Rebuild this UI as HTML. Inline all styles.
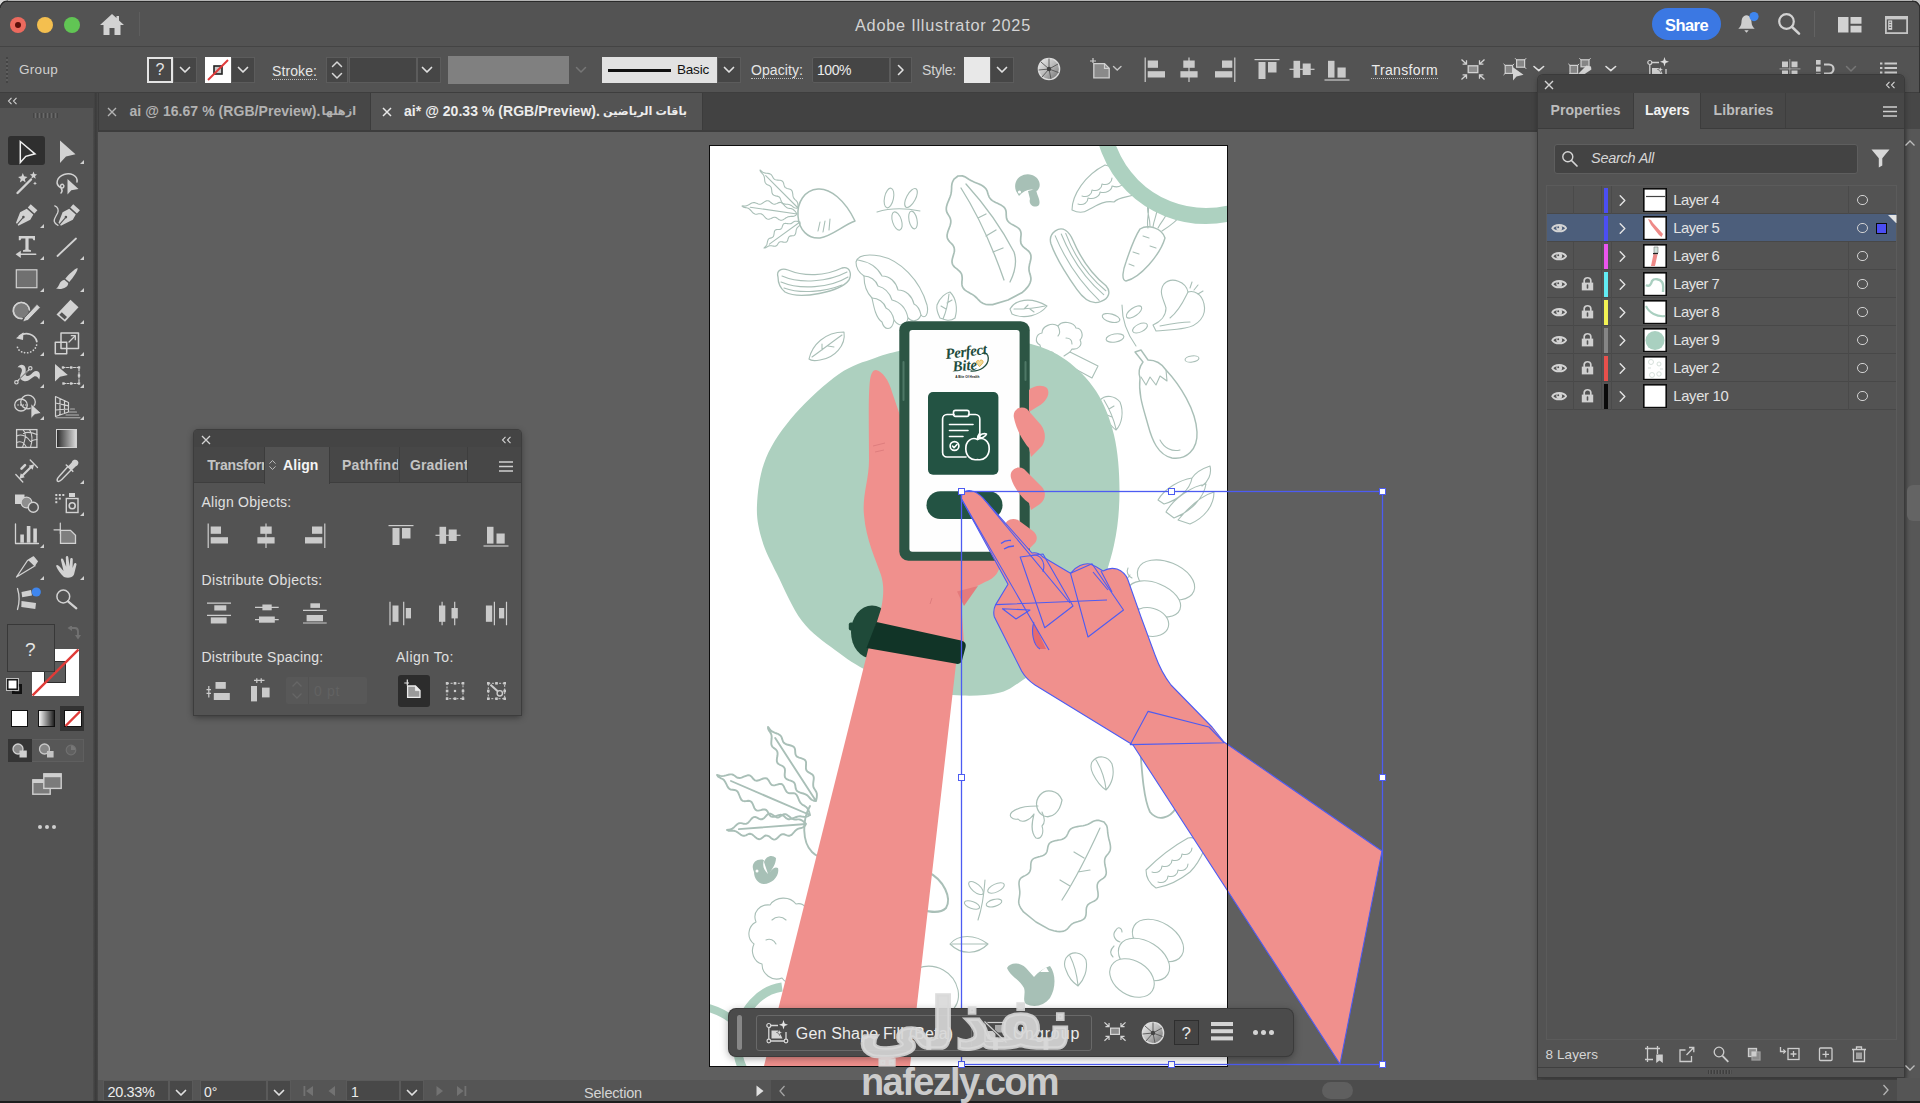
<!DOCTYPE html>
<html lang="en">
<head>
<meta charset="utf-8">
<title>Adobe Illustrator 2025</title>
<style>
*{box-sizing:border-box;margin:0;padding:0}
html,body{width:1920px;height:1103px;overflow:hidden;background:#535353}
body{position:relative;font-family:"Liberation Sans","DejaVu Sans",sans-serif;color:#d6d6d6;font-size:14px}
.abs{position:absolute}
#titlebar{left:0;top:0;width:1920px;height:47px;background:#535353;border-bottom:1px solid #444}
#ctrlbar{left:0;top:48px;width:1920px;height:45px;background:#535353;border-bottom:1px solid #3e3e3e}
#tabbar{left:96px;top:93px;width:1441px;height:38px;background:#424242}
#canvas{left:98px;top:131px;width:1439px;height:949px;background:#5f5f5f;overflow:hidden}
#leftbar{left:0;top:93px;width:94px;height:1010px;background:#535353}
#leftsep{left:93px;top:93px;width:5px;height:1010px;background:linear-gradient(90deg,#4b4b4b,#3b3b3b 55%,#484848)}
#status{left:98px;top:1080px;width:1822px;height:23px;background:#555}
#dock{left:1537px;top:93px;width:383px;height:987px;background:#4a4a4a}
.t{position:absolute;white-space:nowrap;line-height:1}
</style>
</head>
<body>
<div id="titlebar" class="abs"></div>
<div id="ctrlbar" class="abs"></div>
<div id="tabbar" class="abs"></div>
<div id="canvas" class="abs"></div>
<div id="leftbar" class="abs"></div>
<div id="leftsep" class="abs"></div>
<div id="dock" class="abs"></div>
<div id="status" class="abs"></div>
<div class="abs" style="left:10px;top:17px;width:16px;height:16px;border-radius:50%;background:#ec6a5e"></div>
<div class="abs" style="left:15px;top:22px;width:6px;height:6px;border-radius:50%;background:#5a0f0a"></div>
<div class="abs" style="left:37px;top:17px;width:16px;height:16px;border-radius:50%;background:#f4bf4f"></div>
<div class="abs" style="left:64px;top:17px;width:16px;height:16px;border-radius:50%;background:#61c554"></div>
<svg class="abs" style="left:99px;top:13px" width="26" height="23" viewBox="0 0 26 23"><path d="M13 1 L1 12 H4.5 V22 H10.5 V15 H15.5 V22 H21.5 V12 H25 L20 7.4 V3 H17.5 V5.1 Z" fill="#d2d2d2"/></svg>
<div class="abs" style="left:139px;top:12px;width:1px;height:24px;background:#5e5e5e"></div>
<span class="t" style="left:855px;top:16.80px;font-size:16.3px;color:#d4d4d4;letter-spacing:0.759px;">Adobe Illustrator 2025</span>
<div class="abs" style="left:1652px;top:8px;width:69px;height:32px;border-radius:16px;background:#3b78e3"></div>
<span class="t" style="left:1665px;top:16.53px;font-size:16.5px;color:#ffffff;font-weight:700;letter-spacing:-0.572px;">Share</span>
<svg class="abs" style="left:1736px;top:12px" width="24" height="24" viewBox="0 0 24 24"><path d="M10.5 3.2 C6.8 3.6 5.6 6.8 5.5 10 C5.4 13.5 4 15 2.3 16.8 H18.7 C17 15 15.6 13.5 15.5 10 C15.4 6.8 14.2 3.6 10.5 3.2 Z M8.3 18.3 H12.7 L10.5 20.8 Z" fill="#cfcfcf"/><circle cx="18" cy="4.6" r="4.6" fill="#3f86ee"/></svg>
<svg class="abs" style="left:1776px;top:11px" width="26" height="26" viewBox="0 0 26 26"><circle cx="10.5" cy="10.5" r="7.3" fill="none" stroke="#d2d2d2" stroke-width="2.2"/><path d="M15.8 15.8 L23 22.6" stroke="#d2d2d2" stroke-width="2.6" stroke-linecap="round"/></svg>
<div class="abs" style="left:1814px;top:11px;width:1px;height:26px;background:#626262"></div>
<svg class="abs" style="left:1838px;top:17px" width="24" height="16" viewBox="0 0 24 16"><path d="M0 0 H10.5 V15.5 H0 Z M12.5 0 H23.5 V6.8 H12.5 Z M12.5 8.8 H23.5 V15.5 H12.5 Z" fill="#d2d2d2"/></svg>
<svg class="abs" style="left:1885px;top:16px" width="23" height="18" viewBox="0 0 23 18"><rect x="0.9" y="0.9" width="21.2" height="16.2" fill="none" stroke="#c4c4c4" stroke-width="1.8"/><rect x="0" y="0" width="23" height="3.4" fill="#c8c8c8"/><rect x="3.2" y="4.4" width="4" height="9.4" fill="#d4d4d4"/><path d="M4.200 6.200 H6.200 M4.200 8.800 H6.200 M4.200 11.400 H6.200" stroke="#555" stroke-width="1"/></svg>
<!-- window corners -->
<div class="abs" style="left:0;top:0;width:1920px;height:1px;background:#b4b4b4"></div>
<div class="abs" style="left:0;top:1px;width:1920px;height:1.2px;background:#2a2a2a"></div>
<div class="abs" style="left:1919px;top:0;width:1px;height:1103px;background:#333"></div>
<svg class="abs" style="left:0;top:0" width="8" height="8"><path d="M0 0 H8 A8 8 0 0 0 0 8 Z" fill="#d8d8d8"/><path d="M0 8 A8 8 0 0 1 8 1" fill="none" stroke="#2a2a2a" stroke-width="1.200"/></svg>
<svg class="abs" style="left:1912px;top:0" width="8" height="8"><path d="M8 0 H0 A8 8 0 0 1 8 8 Z" fill="#c4c4c4"/><path d="M8 8 A8 8 0 0 0 0 1" fill="none" stroke="#2a2a2a" stroke-width="1.200"/></svg>

<style>
.chev{position:absolute;width:12px;height:8px}
.fld{position:absolute;background:#464646;border:1px solid #5c5c5c}
.dot{position:absolute;height:0;border-bottom:1.5px dotted #bdbdbd}
</style>
<svg width="0" height="0" style="position:absolute"><defs>
<symbol id="chv" viewBox="0 0 12 8"><path d="M1.5 1.5 L6 6 L10.5 1.5" fill="none" stroke="#e0e0e0" stroke-width="1.7" stroke-linecap="round" stroke-linejoin="round"/></symbol>
<symbol id="chvd" viewBox="0 0 12 8"><path d="M1.5 1.5 L6 6 L10.5 1.5" fill="none" stroke="#767676" stroke-width="1.5" stroke-linecap="round" stroke-linejoin="round"/></symbol>
</defs></svg>
<!-- grip -->
<div class="abs" style="left:6px;top:57px;width:2px;height:26px;background:repeating-linear-gradient(#444 0 2px,#5e5e5e 2px 4px)"></div>
<span class="t" style="left:19px;top:63.07px;font-size:13.5px;color:#d0d0d0;letter-spacing:0.294px;">Group</span>
<!-- fill ? -->
<div class="abs" style="left:147px;top:57px;width:26px;height:26px;border:2px solid #e4e4e4;background:#484848"></div>
<span class="t" style="left:155.5px;top:62.46px;font-size:16px;color:#e4e4e4;">?</span>
<div class="fld" style="left:173px;top:57px;width:24px;height:26px"></div>
<svg class="chev" style="left:179px;top:66px"><use href="#chv"/></svg>
<!-- stroke none -->
<div class="abs" style="left:205px;top:57px;width:26px;height:26px;background:#fff"></div>
<svg class="abs" style="left:205px;top:57px" width="26" height="26"><rect x="9" y="9" width="8" height="8" fill="#c8c8c8" stroke="#222" stroke-width="1.6"/><path d="M3 23 L23 3" stroke="#e03a3a" stroke-width="2"/></svg>
<div class="fld" style="left:231px;top:57px;width:24px;height:26px"></div>
<svg class="chev" style="left:237px;top:66px"><use href="#chv"/></svg>
<span class="t" style="left:272px;top:64.15px;font-size:14px;color:#e6e6e6;letter-spacing:0.092px;">Stroke:</span>
<div class="dot" style="left:272px;top:79px;width:45px"></div>
<div class="fld" style="left:326px;top:57px;width:22px;height:26px"></div>
<svg class="abs" style="left:331px;top:60px" width="12" height="20"><path d="M1.5 6.5 L6 2 L10.5 6.5 M1.5 13.5 L6 18 L10.5 13.5" fill="none" stroke="#d8d8d8" stroke-width="1.5" stroke-linecap="round" stroke-linejoin="round"/></svg>
<div class="fld" style="left:349px;top:57px;width:68px;height:26px;background:#454545"></div>
<div class="fld" style="left:417px;top:57px;width:24px;height:26px"></div>
<svg class="chev" style="left:421px;top:66px"><use href="#chv"/></svg>
<div class="abs" style="left:448px;top:56px;width:121px;height:28px;background:#808080"></div>
<svg class="chev" style="left:575px;top:66px"><use href="#chvd"/></svg>
<!-- Basic -->
<div class="abs" style="left:602px;top:57px;width:115px;height:26px;background:#e2e2e2"></div>
<div class="abs" style="left:608px;top:69px;width:63px;height:2.5px;background:#111"></div>
<span class="t" style="left:677px;top:63.07px;font-size:13.5px;color:#111;letter-spacing:-0.203px;">Basic</span>
<div class="fld" style="left:717px;top:57px;width:24px;height:26px"></div>
<svg class="chev" style="left:723px;top:66px"><use href="#chv"/></svg>
<span class="t" style="left:751px;top:62.65px;font-size:14px;color:#e6e6e6;letter-spacing:0.080px;">Opacity:</span>
<div class="dot" style="left:751px;top:78px;width:52px"></div>
<div class="fld" style="left:812px;top:57px;width:78px;height:26px;border-radius:2px 0 0 2px;background:#454545"></div>
<span class="t" style="left:817px;top:62.65px;font-size:14px;color:#ececec;letter-spacing:-0.453px;">100%</span>
<div class="fld" style="left:890px;top:57px;width:22px;height:26px"></div>
<svg class="abs" style="left:897px;top:64px" width="8" height="12"><path d="M1.5 1.5 L6 6 L1.5 10.5" fill="none" stroke="#e0e0e0" stroke-width="1.6" stroke-linecap="round" stroke-linejoin="round"/></svg>
<span class="t" style="left:922px;top:63.15px;font-size:14px;color:#d4d4d4;letter-spacing:-0.169px;">Style:</span>
<div class="abs" style="left:964px;top:57px;width:26px;height:26px;background:#e8e8e8"></div>
<div class="fld" style="left:990px;top:57px;width:24px;height:26px"></div>
<svg class="chev" style="left:996px;top:66px"><use href="#chv"/></svg>
<!-- recolor disc -->
<svg class="abs" style="left:1037px;top:57px" width="24" height="24" viewBox="0 0 24 24"><defs><linearGradient id="dg" x1="0" y1="0" x2="1" y2="1"><stop offset="0" stop-color="#f0f0f0"/><stop offset=".5" stop-color="#b8b8b8"/><stop offset="1" stop-color="#6a6a6a"/></linearGradient></defs><circle cx="12" cy="12" r="10.6" fill="url(#dg)" stroke="#dcdcdc" stroke-width="1.4"/><path d="M12 12 L12 1.5 M12 12 L21 7 M12 12 L21.5 15.5 M12 12 L14 22 M12 12 L5 20 M12 12 L1.6 13 M12 12 L4 5" stroke="#555" stroke-width=".9"/><circle cx="12" cy="12" r="2.2" fill="#444"/></svg>
<!-- artboard doc icon -->
<svg class="abs" style="left:1088px;top:58px" width="36" height="22" viewBox="0 0 36 22"><path d="M5 0 V5 M2 3 H8" stroke="#cfcfcf" stroke-width="1.2"/><path d="M5.8 5.6 H16.5 L21.2 10.3 V19.8 H5.8 Z" fill="#8a8a8a" stroke="#d0d0d0" stroke-width="1.3"/><path d="M16.5 5.6 V10.3 H21.2" fill="none" stroke="#d0d0d0" stroke-width="1.2"/><path d="M25.5 8.5 L29.2 12 L33 8.5" fill="none" stroke="#c4c4c4" stroke-width="1.4" stroke-linecap="round"/></svg>
<svg width="0" height="0" style="position:absolute"><defs>
<symbol id="alL" viewBox="0 0 24 26"><path d="M1.2 0.5 V25" stroke="#cdcdcd" stroke-width="1.2"/><rect x="3.7" y="3.5" width="10.3" height="7.3" fill="#cacaca"/><rect x="3.7" y="14.2" width="17.3" height="6.3" fill="#cacaca"/></symbol>
<symbol id="alC" viewBox="0 0 24 26"><path d="M12 0.5 V25" stroke="#cdcdcd" stroke-width="1.2"/><rect x="6.3" y="3.5" width="11.4" height="7.3" fill="#cacaca"/><rect x="3.4" y="14.2" width="17.2" height="6.3" fill="#cacaca"/></symbol>
<symbol id="alR" viewBox="0 0 24 26"><path d="M22.8 0.5 V25" stroke="#cdcdcd" stroke-width="1.2"/><rect x="10" y="3.5" width="10.3" height="7.3" fill="#cacaca"/><rect x="3" y="14.2" width="17.3" height="6.3" fill="#cacaca"/></symbol>
<symbol id="alT" viewBox="0 0 26 24"><path d="M0.5 1.6 H25.5" stroke="#cdcdcd" stroke-width="1.2"/><rect x="4.5" y="4" width="7" height="17" fill="#cacaca"/><rect x="14" y="4" width="8.5" height="10.5" fill="#cacaca"/></symbol>
<symbol id="alM" viewBox="0 0 26 24"><path d="M0.5 11.3 H25.5" stroke="#cdcdcd" stroke-width="1.2"/><rect x="4.5" y="2.8" width="6.6" height="17" fill="#cacaca"/><rect x="13.7" y="5.5" width="8" height="11.5" fill="#cacaca"/></symbol>
<symbol id="alB" viewBox="0 0 26 24"><path d="M0.5 22 H25.5" stroke="#cdcdcd" stroke-width="1.2"/><rect x="4" y="2.8" width="6.5" height="16.8" fill="#cacaca"/><rect x="13.5" y="9.5" width="8.2" height="10.1" fill="#cacaca"/></symbol>
</defs></svg>
<svg class="abs" style="left:1144px;top:56.5px" width="24" height="26"><use href="#alL"/></svg>
<svg class="abs" style="left:1177.4px;top:56.5px" width="24" height="26"><use href="#alC"/></svg>
<svg class="abs" style="left:1212.4px;top:56.5px" width="24" height="26"><use href="#alR"/></svg>
<svg class="abs" style="left:1253.5px;top:57.5px" width="26" height="24"><use href="#alT"/></svg>
<svg class="abs" style="left:1288.5px;top:57.5px" width="26" height="24"><use href="#alM"/></svg>
<svg class="abs" style="left:1323.5px;top:57.5px" width="26" height="24"><use href="#alB"/></svg>
<span class="t" style="left:1371.5px;top:62.95px;font-size:14px;color:#ececec;letter-spacing:0.358px;">Transform</span>
<div class="dot" style="left:1371px;top:78px;width:67px"></div>
<!-- isolate icon -->
<svg class="abs" style="left:1460px;top:58px" width="26" height="24" viewBox="0 0 26 24"><rect x="8.2" y="7.8" width="9.6" height="6.8" fill="#8c8c8c" stroke="#d2d2d2" stroke-width="1.3"/><g stroke="#d2d2d2" stroke-width="1.3" fill="none"><path d="M1.5 1.5 L6.3 6 M6.5 2.3 V6.2 H2.6"/><path d="M24.5 1.5 L19.7 6 M19.5 2.3 V6.2 H23.4"/><path d="M1.5 21.5 L6.3 17 M6.5 20.7 V16.8 H2.6"/><path d="M24.5 21.5 L19.7 17 M19.5 20.7 V16.8 H23.4"/></g></svg>
<!-- select similar -->
<svg class="abs" style="left:1502px;top:57px" width="44" height="25" viewBox="0 0 44 25"><rect x="3.2" y="8.4" width="7.4" height="8" fill="#858585" stroke="#d0d0d0" stroke-width="1.2"/><rect x="14.6" y="2.8" width="8" height="7.4" fill="#858585" stroke="#d0d0d0" stroke-width="1.2"/><g stroke="#d0d0d0" stroke-width="1"><path d="M1.5 6.8 L3.4 8.6 M12.2 6.8 L10.4 8.6 M1.5 18 L3.4 16.2 M13 1.2 L14.8 3 M24.2 1.2 L22.4 3 M24.2 11.8 L22.4 10"/></g><path d="M11 10.3 V23.5 L14.5 19.5 L21.5 17.8 Z" fill="#d4d4d4"/><path d="M32 9.5 L36.8 13.7 L41.6 9.5" fill="none" stroke="#e0e0e0" stroke-width="1.6" stroke-linecap="round" stroke-linejoin="round"/></svg>
<!-- edit similar -->
<svg class="abs" style="left:1567px;top:57px" width="52" height="25" viewBox="0 0 52 25"><rect x="3" y="8.4" width="7.6" height="8" fill="#858585" stroke="#d0d0d0" stroke-width="1.2"/><rect x="14" y="2.8" width="8" height="7" fill="#858585" stroke="#d0d0d0" stroke-width="1.2"/><g stroke="#d0d0d0" stroke-width="1"><path d="M1.3 6.8 L3.2 8.6 M12.2 6.8 L10.4 8.6 M1.3 18 L3.2 16.2 M12.4 1.2 L14.2 3 M23.6 1.2 L21.8 3"/></g><path d="M10.5 17.6 L19.5 8.4 L24 9.5 L24.4 12.6 L17 17.6 Z" fill="#d4d4d4"/><path d="M39 9.5 L43.8 13.7 L48.6 9.5" fill="none" stroke="#e0e0e0" stroke-width="1.6" stroke-linecap="round" stroke-linejoin="round"/></svg>
<!-- gen shape fill -->
<svg class="abs" style="left:1646px;top:56px" width="26" height="26" viewBox="0 0 26 26"><circle cx="3.8" cy="6.5" r="2" fill="none" stroke="#d0d0d0" stroke-width="1.2"/><path d="M5.8 6.5 H13 M3.8 8.5 V21 H20 V13" fill="none" stroke="#d0d0d0" stroke-width="1.3"/><path d="M6 12 H14 L17 19 H6 Z" fill="#cfcfcf"/><path d="M18.5 1 L19.6 4.6 L23 5.8 L19.6 7 L18.5 10.6 L17.4 7 L14 5.8 L17.4 4.6 Z" fill="#dedede"/><path d="M14.5 10.5 L15.3 12.7 L17.5 13.5 L15.3 14.3 L14.5 16.5 L13.7 14.3 L11.5 13.5 L13.7 12.7 Z" fill="#dedede" stroke="#535353" stroke-width=".6"/></svg>
<!-- right icons -->
<svg class="abs" style="left:1779px;top:59px" width="22" height="20" viewBox="0 0 22 20"><path d="M3 2.5 H9 V8.3 H3 Z M12.5 2.5 H18.5 V8.3 H12.5 Z M3 11.5 H9 V17.5 H3 Z M12.5 11.5 H18.5 V17.5 H12.5 Z" fill="#cacaca"/><path d="M10.8 0 V20 M0.5 9.9 H21.5" stroke="#a0a0a0" stroke-width="1"/></svg>
<svg class="abs" style="left:1815px;top:59px" width="22" height="20" viewBox="0 0 22 20"><rect x="1" y="1" width="4.6" height="4.6" fill="#cacaca"/><rect x="1" y="7.6" width="4.6" height="5" fill="#cacaca"/><rect x="1" y="14.4" width="4.6" height="3.6" fill="#cacaca"/><path d="M9 5.5 H14 A4.5 4.5 0 0 1 14 14.5 H9" fill="none" stroke="#cacaca" stroke-width="2.2"/></svg>
<svg class="chev" style="left:1845px;top:65px"><use href="#chvd"/></svg>
<svg class="abs" style="left:1880px;top:62px" width="17" height="16" viewBox="0 0 17 16"><path d="M0 1.5 H2.4 M4.5 1.5 H17 M0 6 H2.4 M4.5 6 H17 M0 10.5 H2.4 M4.5 10.5 H17" stroke="#cacaca" stroke-width="2"/></svg>

<div class="abs" style="left:98px;top:93px;width:273px;height:38px;background:#474747;border-right:1px solid #3c3c3c;border-left:1px solid #3c3c3c"></div>
<div class="abs" style="left:371px;top:93px;width:332px;height:38px;background:#535353;border-right:1px solid #3c3c3c"></div>
<svg class="abs" style="left:107px;top:107px" width="10" height="10"><path d="M1 1 L9 9 M9 1 L1 9" stroke="#b4b4b4" stroke-width="1.4"/></svg>
<span class="t" style="left:129.5px;top:104.15px;font-size:14px;color:#b2b2b2;font-weight:700;letter-spacing:0.055px;">ai @ 16.67 % (RGB/Preview).</span>
<span class="t" style="left:321.5px;top:106.43px;font-size:11.3px;color:#b2b2b2;font-weight:700;direction:rtl">ازهلها</span>
<svg class="abs" style="left:382px;top:107px" width="10" height="10"><path d="M1 1 L9 9 M9 1 L1 9" stroke="#e8e8e8" stroke-width="1.5"/></svg>
<span class="t" style="left:404px;top:104.15px;font-size:14px;color:#ececec;font-weight:700;letter-spacing:0.037px;">ai* @ 20.33 % (RGB/Preview).</span>
<span class="t" style="left:603px;top:106.43px;font-size:11.3px;color:#ececec;font-weight:700;direction:rtl">باقات الرياضين</span>
<div id="tabline" class="abs" style="left:98px;top:130px;width:1439px;height:1.5px;background:#3d3d3d"></div>

<div class="abs" style="left:0;top:93px;width:94px;height:15px;background:#464646"></div>
<svg class="abs" style="left:7px;top:97px" width="12" height="8"><path d="M4.5 0.8 L1.5 4 L4.5 7.2 M9.5 0.8 L6.5 4 L9.5 7.2" fill="none" stroke="#cfcfcf" stroke-width="1.1"/></svg>
<div class="abs" style="left:33px;top:113px;width:26px;height:5px;background:repeating-linear-gradient(90deg,#454545 0 1px,#535353 1px 2px,#6a6a6a 2px 3px,#535353 3px 4px)"></div>
<div class="abs" style="left:8px;top:136px;width:37px;height:29px;border-radius:3px;background:#2f2f2f"></div>
<style>.tk{position:absolute;width:0;height:0;border-left:4px solid transparent;border-bottom:4px solid #d0d0d0}</style>
<svg class="abs" style="left:0;top:131px" width="94" height="490" viewBox="0 131 94 490" fill="none" stroke="#d2d2d2" stroke-width="1.5" stroke-linejoin="round" stroke-linecap="round">
<!-- r1 -->
<path d="M20.3 141.5 V162.5 L25.8 156.3 L35 153.8 Z" stroke="#f0f0f0" stroke-linejoin="miter"/>
<path d="M60 140.5 V163 L66 156.5 L75.5 154.3 Z" fill="#d2d2d2" stroke="none"/>
<!-- r2 wand / lasso-->
<path d="M17.5 193 L31 179.5" stroke-width="2.4"/>
<path d="M22.8 173 l1.300 3.200 3.400 .700 -2.600 2.200 .700 3.400 -2.800 -1.900 -2.900 1.900 .800 -3.400 -2.600 -2.200 3.400 -.700z M33.5 171.5 l1 2.400 2.600 .500 -2 1.700 .600 2.600 -2.200 -1.500 -2.200 1.500 .600 -2.600 -2 -1.700 2.600 -.500z M35 181.5 l.6 1.3 1.3 .6 -1.3 .6 -.6 1.3 -.6 -1.3 -1.3 -.6 1.3 -.6z" fill="#d2d2d2" stroke="none"/>
<path d="M77 182 C78 175 70 172.5 64 174.5 C57 177 54.5 184 60.5 187.5 C63.5 189 65 186 63 184.5 C61 183.5 59.5 186 61.5 189 C62.5 190.5 62 192 61 193"/>
<path d="M67.5 179 V194.5 L71.3 190.3 L78.5 189 Z" fill="#d2d2d2" stroke="none"/>
<!-- r3 pen / curvature -->
<path d="M26.7 208.8 L20.1 212.2 L16 222.8 L18.4 225.8 L30.3 219.8 L33.3 214.4 Z M27.8 207.4 L30.7 204.200 L37.400 210.200 L34.400 213.600 Z" fill="#d2d2d2" stroke="none"/>
<path d="M17.2 224.3 L22.8 217.800" stroke="#535353" stroke-width="1.1"/><circle cx="23.400" cy="217.100" r="1.300" fill="#535353" stroke="none"/>
<g transform="translate(1.2 0)"><path d="M68 208.800 L61.400 212.200 L57.300 222.800 L59.700 225.800 L71.600 219.800 L74.600 214.400 Z M69.100 207.400 L72 204.200 L78.700 210.200 L75.700 213.600 Z" fill="#d2d2d2" stroke="none"/>
<path d="M58.500 224.300 L64.100 217.800" stroke="#535353" stroke-width="1.1"/><circle cx="64.700" cy="217.100" r="1.300" fill="#535353" stroke="none"/></g>
<path d="M54.800 205.800 C58 207 58.800 210 57.600 213 C56 216.500 53.500 219 54.300 221.500 C55 224 56.500 224.800 58 225.300" stroke-width="1.300"/>
<!-- r4 type / line -->
<path d="M18.8 236 H35 V240.200 H33.500 L32.500 238.400 H28.600 V249.600 L31 250.300 V251.800 H23 V250.300 L25.400 249.600 V238.400 H21.400 L20.400 240.200 H18.800 Z" fill="#d2d2d2" stroke="none"/>
<path d="M20 254.300 H35.700" stroke-width="1.500"/><path d="M15.600 254.300 L20.800 250.700 V257.900 Z" fill="#d2d2d2" stroke="none"/>
<path d="M57.5 256 L76 238.5" stroke-width="1.8"/>
<!-- r5 rect / brush -->
<rect x="16.300" y="269.800" width="20.600" height="17.900" fill="#707070" stroke-width="1.200" stroke-linejoin="miter"/>
<path d="M77.500 268 C78.500 270 73 278 69.300 282 L65.300 278.800 C68 275 75 268.500 77.500 268 Z M64.300 279.800 L68.200 283 C68.500 287.500 62 290 56 288.600 C60 286.800 58.500 281 64.300 279.800 Z" fill="#d2d2d2" stroke="none"/>
<!-- r6 shaper / eraser -->
<path d="M22 318.5 A8 8 0 1 1 29 309.5" stroke-width="1.4"/><path d="M22.3 318.5 A8.2 8.2 0 0 1 13.5 311" stroke="none" fill="#8a8a8a"/>
<circle cx="21.5" cy="310.5" r="7.3" fill="#7a7a7a" stroke="none"/><path d="M22 318.5 A8 8 0 1 1 29.5 310" stroke-width="1.4"/>
<path d="M24.8 317.3 L37 304.3 L40.3 307.4 L28 320.3 L22.8 321.8 Z" fill="#d2d2d2" stroke="#535353" stroke-width=".8"/>
<path d="M56.5 314.5 L70.5 299.8 L78.5 307.3 L65 321.8 Z" fill="#d2d2d2" stroke="none"/><path d="M59.3 314.8 L61.8 312.2 L67 317 L64.7 319.6 Z" fill="#535353" stroke="none"/>
<!-- r7 rotate / scale -->
<path d="M19.5 336 C26 331.5 35 334 36.8 341.5" stroke-width="1.8"/><path d="M16 338.3 L23.5 332.2 L23 340 Z" fill="#d2d2d2" stroke="none"/>
<path d="M36.6 345 C35 352 26 355.5 19.5 350.5 C18 349.3 17.3 347.5 17.3 346" stroke-dasharray="0.1 3" stroke-width="1.7"/>
<rect x="55.3" y="342.3" width="11.4" height="11.4"/><rect x="61" y="333" width="17.5" height="15.5"/><path d="M69 342 L75 336" stroke-width="1.3"/><path d="M71.3 335.7 H75.3 V339.7" stroke-width="1.3"/>
<!-- r8 width / free transform -->
<path d="M17.600 367.500 C19.500 363.500 24.500 364 25.500 368 C26.500 372 24 375 27 376 C31 376.500 32 371.500 36 371 C39.800 370.800 40.800 375 39.200 379.500 C38 377.500 36.800 375.800 34.500 376.300 C31 378 29 381.800 24.500 381.200 C20.500 380.600 19.300 377 20.800 374 C22 371.500 22.500 369.500 21 368 C20 367.200 18.800 367.300 17.600 367.500 Z" fill="#d2d2d2" stroke="none"/>
<path d="M17.300 381.300 L29.500 369.200" stroke="#d2d2d2" stroke-width="1.200"/><path d="M19.500 379 L27.500 371.200" stroke="#535353" stroke-width=".9"/><circle cx="16.400" cy="382.300" r="1.700" fill="#535353" stroke-width="1.200"/><circle cx="30.300" cy="368.300" r="1.700" fill="#535353" stroke-width="1.200"/>
<path d="M55 364 V381.600 L60 376.800 L67.800 375 Z" fill="#d2d2d2" stroke="none"/>
<path d="M63 367.5 H79 V383.5 H64" stroke-width="1.2" stroke-dasharray="2 1.5"/><g fill="#d2d2d2" stroke="none"><rect x="61.8" y="366.3" width="2.4" height="2.4"/><rect x="70" y="366.3" width="2.4" height="2.4"/><rect x="77.8" y="366.3" width="2.4" height="2.4"/><rect x="77.8" y="374.3" width="2.4" height="2.4"/><rect x="77.8" y="382.3" width="2.4" height="2.4"/><rect x="70" y="382.3" width="2.4" height="2.4"/><rect x="62.3" y="382.3" width="2.4" height="2.4"/></g>
<!-- r9 shape builder / perspective -->
<ellipse cx="21" cy="405" rx="6.3" ry="6" stroke-width="1.3"/><ellipse cx="28" cy="402" rx="7.3" ry="6.8" stroke-width="1.3"/><path d="M18 405 H26" stroke-dasharray="0.1 2.5" stroke-width="1.4"/>
<path d="M31 404 V418.5 L34.8 414.5 L41 413.3 Z" fill="#d2d2d2" stroke="#535353" stroke-width=".7"/>
<path d="M55.5 396.5 V416.5 M55.5 396.5 L68.5 402.5 V412 L55.5 416.5 M60 398.5 V415 M64.5 400.5 V413.5 M55.5 403 L68.5 405.8 M55.5 410 L68.5 409" stroke-width="1.2"/><path d="M70.5 409 H74.5 M69.5 412 H76.5 M66 415 H78.5 M56 417.8 H80" stroke-width="1.1" stroke="#b4b4b4"/>
<!-- r10 mesh / gradient -->
<rect x="16.600" y="429.600" width="20.300" height="17.800" stroke-width="1.300" stroke-linejoin="miter"/><path d="M16.600 436 C22 433.500 27 436.500 30.500 441.500 C33 440 35 439.500 36.900 439.500 M16.600 442.500 C21 440.500 24 442 26.500 447.400 M23 429.600 C26.500 433 26 437.500 22.500 447.400 M29.500 429.600 C33 435 32.500 441 30.500 447.400 M23.500 433.500 C27 431.500 32 432.500 36.900 434.500" stroke-width="1.100"/>
<!-- r11 measure / eyedropper -->
<path d="M22 476 L31.500 466.500" stroke-width="2.200" stroke-linecap="butt"/><path d="M19.300 478.700 L20.800 473.300 L24.800 477.300 Z M34.200 464.300 L32.700 469.700 L28.700 465.700 Z" fill="#d2d2d2" stroke="none"/><path d="M15.800 474.500 L22.800 482 M30.200 460 L37.500 467.500" stroke-width="1.300"/><path d="M21.500 468.700 L25 465.200" stroke-width="2.600" stroke-linecap="round"/>
<path d="M68 466.5 L59 476.5 C57.5 478 56.8 479.7 57.3 481 C58.5 482 60.3 481 61.8 479.5 L71 470" stroke-width="1.4"/><path d="M66.3 465 L72.8 471.3 M68.5 467 L72.3 463 C73 460.3 75.5 459.8 77 461.3 C78.3 462.8 77.5 465 75.3 465.8 L71.2 469.8" fill="#d2d2d2" stroke-width="1.6"/>
<!-- r12 blend / symbol sprayer -->
<rect x="15" y="494.5" width="9.5" height="9.5" fill="#d2d2d2" stroke="none"/><circle cx="26.5" cy="502.5" r="5.4" fill="#8e8e8e" stroke="#d2d2d2" stroke-width="1.2"/><circle cx="33.3" cy="507.3" r="5" fill="#535353" stroke-width="1.4"/>
<g fill="#d2d2d2" stroke="none"><rect x="55.3" y="494" width="2" height="2"/><rect x="58.8" y="494" width="2" height="2"/><rect x="62.3" y="494" width="2" height="2"/><rect x="55.3" y="497.6" width="2" height="2"/><rect x="58.8" y="497.6" width="2" height="2"/><rect x="55.3" y="501.2" width="2" height="2"/><rect x="69" y="493" width="6" height="4"/></g><rect x="66.3" y="498.5" width="11.7" height="14" stroke-width="1.4" stroke-linejoin="miter"/><circle cx="72.2" cy="505.8" r="3" stroke-width="1.6"/>
<!-- r13 graph / artboard -->
<path d="M15.5 524 V543.5 H38.5" stroke-width="1.3"/><rect x="20.3" y="534.5" width="3.6" height="8.2" fill="#d2d2d2" stroke="none"/><rect x="26.8" y="526" width="3.6" height="16.7" fill="#d2d2d2" stroke="none"/><rect x="33.3" y="528.5" width="3.6" height="14.2" fill="#d2d2d2" stroke="none"/>
<path d="M60.3 523 V533.5 M54 529.8 H60.5" stroke-width="1.2"/><path d="M60.5 530.3 H70.5 L75.5 535.3 V543.3 H60.5 Z" fill="#7f7f7f" stroke-width="1.3" stroke-linejoin="miter"/>
<!-- r14 slice / hand -->
<path d="M16.5 577 L27.5 560.5 L33.5 556.8 L37.3 561.5 L33.8 566.5 Z M29 560 L35 565.7" stroke-width="1.3"/><path d="M28.5 559.5 L33.5 556.8 L37.3 561.5 L34.5 565.5 Z" fill="#d2d2d2" stroke="none"/>
<path d="M60.5 567.5 C58.5 565 56 564 56.3 566.5 C57.5 569.5 60.5 574 64 577 C67.5 578.5 72.5 578 74 574.5 L76.5 564.5 C76.5 562.5 74.5 562.5 74 564 L72.6 568 L72.8 559.3 C72.6 557.4 70.4 557.4 70.2 559.3 L69.6 566.5 L68.3 557.3 C68 555.5 65.8 555.7 65.8 557.6 L66.2 566.8 L63.3 559.5 C62.5 557.8 60.5 558.5 61 560.3 L63.5 571 Z" fill="#d2d2d2" stroke="none"/>
<!-- r15 ai toolbar / zoom -->
<path d="M17.5 588.5 C19.5 595 19.5 603 17.5 609.5" stroke-width="1.3"/><path d="M21.5 592 L31 590 L32 595.5 L22.2 597.3 Z M21.5 601 L36 603 L35.3 609 L21.3 607 Z" fill="#cfcfcf" stroke="none"/><circle cx="36.3" cy="592" r="4.6" fill="#3f86ee" stroke="none"/>
<circle cx="63.3" cy="596.5" r="6.4" stroke-width="1.5"/><path d="M68 601.3 L76.3 608.3" stroke-width="2.2"/>
</svg>
<div class="abs" style="left:56.2px;top:429.200px;width:21.200px;height:18.600px;border:1.300px solid #d2d2d2;background:linear-gradient(90deg,#2e2e2e,#d8d8d8)"></div>
<i class="tk" style="left:80px;top:160px"></i>
<i class="tk" style="left:40px;top:224px"></i>
<i class="tk" style="left:40px;top:256px"></i><i class="tk" style="left:80px;top:256px"></i>
<i class="tk" style="left:40px;top:288px"></i><i class="tk" style="left:80px;top:288px"></i>
<i class="tk" style="left:40px;top:320px"></i><i class="tk" style="left:80px;top:320px"></i>
<i class="tk" style="left:40px;top:352px"></i><i class="tk" style="left:80px;top:352px"></i>
<i class="tk" style="left:40px;top:384px"></i><i class="tk" style="left:80px;top:384px"></i>
<i class="tk" style="left:40px;top:416px"></i><i class="tk" style="left:80px;top:416px"></i>
<i class="tk" style="left:80px;top:480px"></i>
<i class="tk" style="left:80px;top:512px"></i>
<i class="tk" style="left:40px;top:544px"></i>
<i class="tk" style="left:40px;top:576px"></i><i class="tk" style="left:80px;top:576px"></i>
<!-- fill/stroke -->
<div class="abs" style="left:32px;top:649px;width:47px;height:47px;background:#fff"></div>
<div class="abs" style="left:44px;top:661px;width:22px;height:22px;background:#5c5c5c;border:1.5px solid #2e2e2e"></div>
<svg class="abs" style="left:32px;top:649px" width="47" height="47"><path d="M0.5 46.5 L46.5 0.5" stroke="#e03b38" stroke-width="2.4"/></svg>
<div class="abs" style="left:7px;top:624px;width:48px;height:48px;background:#555;border:1px solid #383838"></div>
<span class="t" style="left:25px;top:639.92px;font-size:19px;color:#e6e6e6;">?</span>
<svg class="abs" style="left:66px;top:626px" width="16" height="15" viewBox="0 0 16 15"><path d="M5.5 2 H9 C11 2 12 3.5 12 5.5 V9.5" fill="none" stroke="#727272" stroke-width="1.8"/><path d="M1.5 2 L6 -1 V5 Z M12 13.5 L9 9 H15 Z" fill="#727272"/></svg>
<svg class="abs" style="left:6px;top:678px" width="18" height="18" viewBox="0 0 18 18"><rect x="6" y="6" width="10" height="10" fill="#111" /><rect x="8.6" y="8.6" width="4.8" height="4.8" fill="#535353"/><rect x="1.8" y="1.8" width="9.4" height="9.4" fill="#fff" stroke="#111" stroke-width="1.4"/><rect x="0.5" y="0.5" width="12" height="12" fill="none" stroke="#d8d8d8" stroke-width=".8"/></svg>
<!-- colour mode -->
<div class="abs" style="left:60px;top:706px;width:24px;height:25px;background:#333"></div>
<div class="abs" style="left:10.5px;top:709.5px;width:17.5px;height:17.5px;background:#fff;border:1.3px solid #111"></div>
<div class="abs" style="left:37.5px;top:709.5px;width:17.5px;height:17.5px;background:linear-gradient(90deg,#f4f4f4,#222);border:1.3px solid #111"></div>
<div class="abs" style="left:64px;top:709.5px;width:17.5px;height:17.5px;background:#fff;border:1.3px solid #111"></div>
<svg class="abs" style="left:64px;top:709.5px" width="18" height="18"><path d="M1.5 16 L16 1.5" stroke="#e03b38" stroke-width="2.4"/></svg>
<!-- draw modes -->
<div class="abs" style="left:8px;top:739px;width:76px;height:23px;background:#575757;border:1px solid #5f5f5f"></div>
<div class="abs" style="left:8px;top:739px;width:23.5px;height:23px;background:#353535"></div>
<svg class="abs" style="left:8px;top:739px" width="76" height="23" viewBox="0 0 76 23"><circle cx="10" cy="10" r="5" fill="#8a8a8a" stroke="#d0d0d0" stroke-width="1.3"/><rect x="11.5" y="11.5" width="7.3" height="7" fill="#d0d0d0"/><circle cx="36.5" cy="10" r="5" fill="#868686" stroke="#c8c8c8" stroke-width="1.3"/><rect x="39" y="12" width="6.6" height="6.5" fill="#c4c4c4"/><circle cx="63" cy="11" r="4.8" fill="#606060" stroke="#707070" stroke-width="1.2"/><path d="M63 11 V6.5 A4.5 4.5 0 0 1 67.5 11 Z" fill="#777"/></svg>
<!-- screen mode -->
<svg class="abs" style="left:31px;top:772px" width="32" height="24" viewBox="0 0 32 24"><rect x="1.8" y="7.8" width="17.4" height="14.4" fill="#7b7b7b" stroke="#cfcfcf" stroke-width="1.4"/><rect x="1.8" y="7.8" width="17.4" height="3.2" fill="#cfcfcf"/><rect x="12.8" y="1.8" width="17.4" height="14.6" fill="#7b7b7b" stroke="#cfcfcf" stroke-width="1.4"/><rect x="12.8" y="1.8" width="17.4" height="3.4" fill="#cfcfcf"/></svg>
<div class="abs" style="left:37.5px;top:825px;width:4.4px;height:4.4px;border-radius:50%;background:#cfcfcf;box-shadow:7px 0 0 #cfcfcf,14px 0 0 #cfcfcf"></div>

<svg class="abs" style="left:98px;top:131px" width="1439" height="949" viewBox="98 131 1439 949">
<defs><path id="rh" d="M961.5,499 C960,493 966,489.5 972,491 C977,492 981,496 983,498 L1032,553 C1036,552 1040,554 1043,557 L1070.5,573.3 C1076,566 1084,563 1090,564 C1096,566 1100,569 1103,571 C1108,568 1113,568 1117,569 C1122,571 1126,575 1127.600,579 L1141,617 L1155,655 C1159,666 1164,676 1171,685 L1212,727 L1224,742 L1382,851 L1340,1064 L1133,745 L1035,685 C1029,681 1025,677 1021.600,671 L994.400,617 C993,612 994,608 995.700,604.600 L1008,584.200 Z"/><clipPath id="abclip"><rect x="710" y="146" width="517" height="920"/></clipPath></defs>
<rect x="709.5" y="145.5" width="518" height="921" fill="#ffffff" stroke="#0d0d0d" stroke-width="1"/>
<g clip-path="url(#abclip)">
<!--VEGSTART--><g fill="none" stroke="#a9bfb7" stroke-width="1.1" stroke-linecap="round" stroke-linejoin="round">
<!-- radish -->
<path d="M855,221 C845,200 830,188 818,189 C804,190 797,203 798,216 C799,230 808,239 820,238 C832,236 842,226 855,221 Z" stroke-width="1.5"/>
<path d="M820,222 L818,231 M825,221 L823,232 M830,219 L829,230"/>
<path d="M798.0,208.0 L798.1,206.7 L798.0,205.5 L797.9,204.3 L797.7,203.2 L797.4,202.3 L796.9,201.5 L796.3,200.8 L795.7,200.2 L795.0,199.6 L794.4,198.9 L793.8,198.2 L793.4,197.4 L793.1,196.4 L792.9,195.4 L792.8,194.2 L792.6,193.1 L792.4,192.0 L792.1,191.1 L791.6,190.3 L791.0,189.7 L790.1,189.3 L789.2,189.0 L788.1,188.7 L787.1,188.5 L786.2,188.1 L785.4,187.6 L784.8,187.0 L784.4,186.1 L784.1,185.2 L783.8,184.2 L783.6,183.2 L783.2,182.3 L782.7,181.5 L782.0,180.9 L781.1,180.5 L780.1,180.3 L779.0,180.2 L777.8,180.1 L776.6,180.0 L775.6,179.7 L774.7,179.4 L774.0,178.8 L773.4,178.1 L772.9,177.4 L772.5,176.5 L772.0,175.7 L771.5,175.0 L770.8,174.4 L770.0,173.9 L769.0,173.6 L768.0,173.4 L766.9,173.3 L765.7,173.1 L764.7,172.9 L763.7,172.6 L762.9,172.2 L762.1,171.7 L761.4,171.1 L760.7,170.5 L760.0,170.0 L760.0,170.0 L760.2,171.0 L760.7,171.8 L761.3,172.5 L761.9,173.2 L762.5,173.8 L763.1,174.5 L763.6,175.2 L764.0,176.1 L764.3,177.1 L764.5,178.2 L764.6,179.3 L764.7,180.5 L764.9,181.6 L765.2,182.5 L765.7,183.3 L766.3,184.0 L767.0,184.5 L767.9,184.9 L768.8,185.3 L769.6,185.7 L770.3,186.3 L770.9,187.0 L771.3,187.8 L771.5,188.9 L771.7,190.0 L771.8,191.2 L771.9,192.3 L772.2,193.3 L772.6,194.2 L773.2,194.8 L774.0,195.3 L774.9,195.6 L775.9,195.9 L777.0,196.1 L778.0,196.4 L778.8,196.8 L779.5,197.3 L780.1,198.1 L780.5,198.9 L780.8,199.9 L781.1,200.8 L781.5,201.7 L781.9,202.5 L782.6,203.2 L783.4,203.6 L784.4,203.9 L785.4,204.1 L786.6,204.2 L787.7,204.3 L788.8,204.5 L789.8,204.8 L790.7,205.2 L791.5,205.6 L792.2,206.2 L792.9,206.8 L793.6,207.3 L794.5,207.7 L795.4,208.0 L796.5,208.2 L798.0,208.0 Z M798.0,208.0 L765.7,175.7"/>
<path d="M797.0,214.0 L796.2,212.8 L795.5,211.7 L794.7,210.8 L793.8,210.0 L793.0,209.3 L792.1,208.9 L791.2,208.6 L790.3,208.5 L789.4,208.4 L788.5,208.2 L787.6,208.0 L786.7,207.5 L785.9,206.9 L785.0,206.1 L784.2,205.2 L783.4,204.3 L782.6,203.5 L781.8,202.9 L780.9,202.5 L780.0,202.4 L779.0,202.6 L778.0,202.9 L777.0,203.4 L776.0,203.8 L775.0,204.1 L774.1,204.2 L773.2,204.0 L772.3,203.6 L771.5,203.0 L770.6,202.3 L769.8,201.6 L768.9,201.1 L768.0,200.7 L767.1,200.7 L766.1,200.9 L765.1,201.4 L764.1,202.1 L763.1,202.8 L762.0,203.4 L761.0,203.9 L760.1,204.2 L759.1,204.2 L758.2,204.0 L757.3,203.6 L756.4,203.2 L755.6,202.9 L754.7,202.6 L753.7,202.6 L752.8,202.7 L751.8,203.1 L750.8,203.6 L749.7,204.2 L748.7,204.8 L747.7,205.3 L746.7,205.7 L745.8,205.9 L744.8,206.0 L743.9,206.0 L742.9,205.9 L742.0,206.0 L742.0,206.0 L742.8,206.7 L743.7,207.2 L744.6,207.4 L745.5,207.6 L746.4,207.8 L747.3,208.0 L748.2,208.3 L749.1,208.8 L749.9,209.5 L750.7,210.3 L751.5,211.2 L752.3,212.2 L753.2,213.0 L754.0,213.6 L754.9,214.0 L755.8,214.2 L756.7,214.2 L757.7,214.0 L758.6,213.8 L759.6,213.7 L760.5,213.7 L761.4,213.9 L762.3,214.4 L763.1,215.1 L763.9,216.0 L764.7,216.9 L765.6,217.8 L766.4,218.6 L767.2,219.0 L768.2,219.2 L769.1,219.1 L770.1,218.8 L771.1,218.4 L772.1,217.9 L773.1,217.5 L774.1,217.3 L775.0,217.3 L775.9,217.5 L776.8,218.0 L777.6,218.6 L778.5,219.2 L779.3,219.8 L780.2,220.1 L781.1,220.2 L782.1,220.1 L783.1,219.7 L784.1,219.1 L785.1,218.5 L786.1,217.8 L787.2,217.3 L788.2,216.8 L789.1,216.6 L790.1,216.5 L791.0,216.4 L792.0,216.4 L792.9,216.4 L793.9,216.2 L794.9,215.8 L795.9,215.2 L797.0,214.0 Z M797.0,214.0 L750.2,207.2"/>
<path d="M800.0,222.0 L798.8,221.6 L797.7,221.4 L796.7,221.2 L795.8,221.2 L794.9,221.3 L794.2,221.5 L793.5,221.9 L792.9,222.3 L792.3,222.8 L791.7,223.2 L791.1,223.6 L790.3,223.8 L789.4,223.8 L788.5,223.8 L787.5,223.6 L786.5,223.5 L785.5,223.4 L784.6,223.5 L783.9,223.7 L783.3,224.2 L782.9,224.9 L782.6,225.7 L782.3,226.6 L782.0,227.4 L781.6,228.2 L781.2,228.8 L780.5,229.2 L779.8,229.4 L778.9,229.5 L778.0,229.5 L777.1,229.5 L776.3,229.6 L775.6,229.9 L775.0,230.4 L774.6,231.1 L774.3,232.0 L774.2,233.0 L774.0,234.1 L773.8,235.1 L773.6,236.0 L773.2,236.7 L772.7,237.2 L772.0,237.6 L771.3,237.9 L770.5,238.1 L769.8,238.3 L769.1,238.6 L768.5,239.1 L768.1,239.8 L767.8,240.6 L767.5,241.5 L767.3,242.5 L767.1,243.5 L766.9,244.4 L766.5,245.2 L766.1,245.9 L765.6,246.4 L765.1,246.9 L764.5,247.4 L764.0,248.0 L764.0,248.0 L764.9,248.0 L765.7,247.8 L766.3,247.4 L766.9,247.0 L767.5,246.6 L768.2,246.2 L768.9,245.9 L769.7,245.7 L770.6,245.7 L771.5,245.8 L772.6,246.0 L773.6,246.1 L774.6,246.2 L775.4,246.1 L776.2,245.9 L776.8,245.5 L777.3,244.9 L777.7,244.2 L778.1,243.5 L778.6,242.9 L779.1,242.3 L779.7,242.0 L780.5,241.8 L781.4,241.8 L782.4,241.9 L783.5,242.1 L784.5,242.2 L785.4,242.3 L786.2,242.1 L786.8,241.7 L787.3,241.1 L787.7,240.3 L787.9,239.4 L788.2,238.5 L788.5,237.7 L788.9,237.0 L789.4,236.4 L790.1,236.1 L790.9,235.9 L791.7,235.9 L792.6,235.8 L793.5,235.7 L794.2,235.4 L794.8,235.0 L795.2,234.4 L795.6,233.5 L795.8,232.6 L796.0,231.6 L796.1,230.5 L796.3,229.6 L796.7,228.7 L797.0,228.0 L797.5,227.4 L798.1,226.9 L798.6,226.4 L799.1,225.8 L799.5,225.2 L799.9,224.4 L800.1,223.4 L800.0,222.0 Z M800.0,222.0 L769.4,244.1"/>
<!-- sprig top -->
<path d="M877,212 C890,208 905,208 920,211"/>
<ellipse cx="889" cy="198" rx="4.500" ry="10" transform="rotate(12 889 198)"/><ellipse cx="911" cy="198" rx="4.500" ry="10.500" transform="rotate(28 911 198)"/><ellipse cx="897" cy="221" rx="4.500" ry="9.500" transform="rotate(-18 897 221)"/><ellipse cx="913" cy="220" rx="4" ry="9" transform="rotate(-12 913 220)"/>
<!-- lettuce -->
<path d="M1008.0,300.0 L1021.8,292.8 L1025.1,289.9 L1027.3,287.4 L1028.9,285.2 L1030.0,283.1 L1030.6,281.3 L1030.9,279.6 L1030.9,278.0 L1030.6,276.5 L1030.3,275.0 L1029.8,273.6 L1029.4,272.1 L1029.1,270.7 L1029.0,269.1 L1029.0,267.5 L1029.3,265.8 L1029.6,264.0 L1030.1,262.3 L1030.5,260.5 L1030.9,258.7 L1031.0,257.1 L1030.9,255.5 L1030.5,254.1 L1029.8,252.7 L1028.9,251.5 L1027.7,250.4 L1026.4,249.3 L1025.0,248.3 L1023.7,247.2 L1022.6,246.1 L1021.7,244.8 L1021.0,243.5 L1020.7,242.0 L1020.6,240.5 L1020.7,238.8 L1020.8,237.2 L1021.0,235.5 L1021.1,233.9 L1020.9,232.3 L1020.5,230.9 L1019.8,229.6 L1018.7,228.4 L1017.3,227.4 L1015.8,226.4 L1014.1,225.5 L1012.3,224.6 L1010.7,223.6 L1009.3,222.6 L1008.2,221.5 L1007.3,220.2 L1006.7,218.8 L1006.4,217.3 L1006.3,215.8 L1006.2,214.2 L1006.2,212.6 L1006.0,211.1 L1005.6,209.7 L1004.9,208.3 L1003.9,207.1 L1002.6,206.1 L1001.1,205.1 L999.3,204.2 L997.5,203.3 L995.6,202.5 L993.9,201.6 L992.4,200.6 L991.0,199.5 L990.0,198.3 L989.2,197.1 L988.6,195.7 L988.1,194.3 L987.7,192.9 L987.3,191.4 L986.7,190.1 L985.9,188.8 L984.8,187.6 L983.5,186.5 L982.0,185.5 L980.3,184.6 L978.4,183.8 L976.4,183.0 L974.5,182.2 L972.6,181.3 L970.9,180.4 L969.2,179.5 L967.6,178.5 L966.1,177.6 L964.4,176.6 L962.3,175.9 L958.0,176.0 L958.0,176.0 L954.0,179.2 L952.8,181.3 L952.1,183.2 L951.8,184.9 L951.6,186.6 L951.6,188.2 L951.5,189.8 L951.4,191.5 L951.1,193.2 L950.7,195.0 L950.1,196.8 L949.4,198.7 L948.6,200.6 L947.8,202.5 L947.1,204.4 L946.6,206.2 L946.3,208.0 L946.3,209.6 L946.5,211.1 L947.0,212.5 L947.7,213.8 L948.5,215.1 L949.3,216.4 L950.0,217.7 L950.5,219.1 L950.8,220.6 L950.8,222.1 L950.6,223.8 L950.1,225.6 L949.4,227.5 L948.7,229.4 L948.0,231.3 L947.5,233.1 L947.1,234.9 L947.1,236.5 L947.3,238.0 L947.9,239.3 L948.7,240.6 L949.7,241.8 L950.9,243.0 L952.0,244.1 L953.0,245.3 L953.7,246.6 L954.2,248.0 L954.4,249.5 L954.4,251.2 L954.0,252.9 L953.5,254.7 L953.0,256.5 L952.5,258.3 L952.1,260.1 L952.0,261.7 L952.2,263.2 L952.7,264.6 L953.5,265.9 L954.6,267.1 L955.9,268.2 L957.2,269.2 L958.5,270.3 L959.7,271.4 L960.7,272.6 L961.5,273.9 L961.9,275.3 L962.1,276.8 L962.2,278.4 L962.1,280.1 L961.9,281.7 L961.9,283.4 L962.0,284.9 L962.3,286.4 L963.0,287.7 L963.9,289.0 L965.1,290.1 L966.5,291.1 L968.1,292.1 L969.7,293.0 L971.4,293.9 L973.0,294.9 L974.4,295.9 L975.7,297.0 L976.9,298.1 L978.0,299.3 L979.1,300.4 L980.3,301.6 L981.6,302.6 L983.3,303.5 L985.5,304.3 L988.4,304.7 L992.6,304.6 L1008.0,300.0 Z" stroke-width="1.700"/>
<path d="M961,188 C975,210 990,240 1004,280 M966,184 C985,205 1000,225 1014,252 C1018,264 1014,274 1010,282 M978,218 L986,214 M986,236 L996,230 M993,252 L1003,248" stroke-width="1.300"/>
<!-- corn top -->
<path d="M1072,210 C1072,195 1085,175 1105,165 C1112,166 1118,172 1122,178 C1128,182 1132,188 1136,194 C1128,198 1120,196 1114,202 C1104,200 1096,206 1088,210 C1082,214 1076,212 1072,210 Z"/>
<path d="M1082,196 C1088,198 1092,194 1092,190 C1098,192 1102,188 1102,184 C1108,186 1112,182 1112,178 M1078,204 C1084,206 1088,202 1088,198 C1094,200 1100,196 1100,192 C1106,194 1112,190 1112,186 C1118,188 1122,186 1124,182"/>
<!-- carrot -->
<path d="M1140,229 C1148,224 1162,228 1165,238 C1160,255 1140,278 1126,281 C1121,280 1123,270 1126,262 C1130,250 1134,238 1140,229 Z" stroke-width="1.400"/>
<path d="M1133,252 L1139,254 M1129,264 L1134,266 M1150,246 L1156,248 M1143,236 L1149,238 M1148,228 C1146,220 1150,212 1148,205 M1153,227 C1154,218 1158,214 1157,206 M1158,228 C1162,220 1168,216 1168,208 M1162,231 C1170,226 1176,222 1182,214 M1150,226 C1150,216 1146,212 1148,204"/>
<!-- cucumbers -->
<g transform="translate(1077,267) rotate(55)"><path d="M-42,-3 C-42,-12 -34,-14 -24,-12 C-5,-8 15,-8 32,-13 C40,-14 44,-8 42,0 C40,10 30,13 18,13 C0,13 -20,12 -34,8 C-40,6 -42,2 -42,-3 Z" stroke-width="1.400"/><path d="M-36,-6 C-10,0 15,0 38,-6 M-38,0 C-10,6 15,6 40,1 M-34,-10 C-10,-4 15,-4 36,-10"/></g>
<path d="M778,277 C776,270 782,268 788,270 C805,277 825,276 842,268 C850,266 852,274 849,280 C840,292 800,300 785,292 C780,288 778,282 778,277 Z" stroke-width="1.300"/>
<path d="M782,276 C800,284 828,282 847,272 M781,282 C800,290 830,288 848,277 M784,288 C800,294 825,292 842,285"/>
<!-- artichoke -->
<path d="M856,262 C858,254 868,254 880,256 C900,260 920,280 927,305 C929,314 925,320 921,315 C918,322 912,322 908,318 C906,328 898,326 894,320 C892,332 884,330 882,322 C876,318 874,308 872,298 C866,292 864,284 864,276 C858,272 856,268 856,262 Z"/>
<path d="M858,260 C870,262 878,268 882,276 C890,276 896,282 898,290 C906,290 912,296 914,304 C918,306 920,310 921,315 M864,276 C870,276 876,280 878,286 C886,288 890,294 892,300 C900,302 906,308 908,318 M872,298 C878,298 884,302 886,308 C890,310 893,315 894,320"/>
<!-- small leaves -->
<path d="M809,359 C812,345 825,332 844,332 C846,345 835,358 820,360 C815,361 811,361 809,359 Z M812,357 C822,350 832,342 842,335 M822,350 L822,344 M828,346 L834,347"/>
<path d="M937,305 C940,297 946,293 950,292 C956,298 958,308 955,318 C950,322 945,320 940,318 C938,314 936,310 937,305 Z M949,294 C948,304 946,312 943,319 M947,303 L952,300 M946,309 L941,306"/>
<path d="M1010,309 C1015,300 1030,296 1047,306 C1040,315 1025,320 1012,314 Z M1014,309 C1024,309 1036,308 1045,306 M1024,309 L1028,305 M1030,309 L1034,312"/>
<!-- broccoli -->
<path d="M1040,345 C1034,342 1036,334 1042,333 C1042,326 1052,322 1058,326 C1062,320 1074,322 1076,328 C1082,328 1084,336 1080,340 C1083,345 1078,350 1072,349 L1070,352 L1098,366 L1092,378 L1066,364 C1060,362 1058,356 1052,352 C1046,352 1040,350 1040,345 Z" fill="#ffffff"/>
<path d="M1058,326 C1060,330 1060,334 1058,336 M1066,338 C1070,338 1072,340 1072,344 M1064,356 L1070,352"/>
<!-- sprig right -->
<path d="M1122,305 C1122,320 1128,335 1136,346"/>
<ellipse cx="1111" cy="318" rx="9" ry="4" transform="rotate(15 1111 318)"/><ellipse cx="1134" cy="312" rx="9" ry="4" transform="rotate(-35 1134 312)"/><ellipse cx="1115" cy="338" rx="9" ry="4" transform="rotate(-10 1115 338)"/><ellipse cx="1140" cy="328" rx="8" ry="4" transform="rotate(-25 1140 328)"/>
<!-- garlic -->
<path d="M1153,325 L1156,331 C1165,330 1175,330 1185,328 C1198,326 1207,316 1204,304 C1202,294 1194,290 1188,292 C1186,282 1172,276 1164,284 C1158,292 1164,300 1166,308 C1166,316 1160,322 1153,325 Z"/>
<path d="M1188,292 C1184,300 1180,310 1170,318 M1190,288 L1192,282 M1194,290 L1198,285 M1198,294 L1203,291 M1160,326 C1170,324 1180,322 1190,322"/>
<!-- eggplant -->
<path d="M1135,352 L1141,350 L1148,360 C1156,360 1162,364 1166,370 C1180,385 1196,410 1197,432 C1198,450 1186,460 1172,458 C1158,455 1152,440 1148,425 C1144,410 1138,395 1140,378 C1138,372 1140,366 1143,362 Z" stroke-width="1.400"/>
<path d="M1141,377 L1146,385 L1150,377 L1156,385 L1160,376 L1167,381 L1166,370 M1160,440 C1164,448 1172,452 1180,450"/>
<ellipse cx="1192" cy="359" rx="7" ry="3" transform="rotate(-8 1192 359)"/>
<!-- leaf mid right -->
<path d="M1100,400 C1106,394 1115,396 1120,402 C1124,412 1122,424 1116,430 C1110,426 1108,420 1104,416 C1100,410 1098,405 1100,400 Z M1104,400 C1110,410 1114,420 1116,429 M1109,409 L1114,406 M1112,417 L1107,415"/>
<!-- peas -->
<path d="M1158,500 C1165,488 1180,480 1192,478 C1190,490 1178,500 1164,504 Z M1166,512 C1174,498 1192,486 1206,484 C1204,498 1190,512 1174,518 Z M1178,520 C1188,508 1200,496 1214,492 C1214,506 1204,518 1190,524 Z M1192,478 C1196,472 1204,468 1210,466 C1212,474 1208,482 1202,486"/>
<!-- tomato stack -->
<ellipse cx="1166" cy="580" rx="30" ry="18" transform="rotate(22 1166 580)" fill="#fff"/><ellipse cx="1154" cy="599" rx="28" ry="16" transform="rotate(22 1154 599)" fill="#fff"/><ellipse cx="1150" cy="622" rx="19" ry="14" transform="rotate(15 1150 622)" fill="#fff"/>
<path d="M1128,568 C1126,572 1128,576 1132,578 M1130,575 L1126,580"/>
<!-- bottom: leaf, small radish -->
<path d="M1092,762 C1098,754 1108,756 1112,764 C1115,774 1112,784 1106,790 C1100,786 1096,780 1093,774 C1091,770 1090,766 1092,762 Z M1096,760 C1102,770 1105,780 1106,789"/>
<path d="M1062,800 C1058,790 1046,788 1040,795 C1034,802 1036,812 1044,816 C1052,819 1060,812 1062,800 Z" stroke-width="1.300"/>
<path d="M1038,806 C1030,806 1020,806 1012,812 C1008,816 1012,820 1018,819 C1022,824 1030,820 1034,814 C1032,822 1030,832 1036,838 C1042,840 1044,832 1042,826 C1046,822 1044,816 1042,812"/>
<!-- lettuce 2 -->
<path d="M1036.0,922.0 L1049.6,929.6 L1053.8,930.8 L1057.0,931.4 L1059.6,931.6 L1061.8,931.4 L1063.7,931.1 L1065.2,930.5 L1066.4,929.7 L1067.5,928.8 L1068.4,927.8 L1069.2,926.7 L1070.1,925.7 L1071.1,924.7 L1072.2,923.9 L1073.5,923.1 L1075.0,922.5 L1076.6,922.0 L1078.2,921.5 L1079.9,920.9 L1081.4,920.4 L1082.8,919.7 L1084.0,918.9 L1084.9,917.9 L1085.5,916.7 L1085.9,915.3 L1086.1,913.8 L1086.2,912.2 L1086.2,910.6 L1086.3,909.1 L1086.5,907.6 L1087.0,906.3 L1087.6,905.1 L1088.6,904.1 L1089.7,903.3 L1091.1,902.6 L1092.5,901.9 L1093.9,901.2 L1095.2,900.5 L1096.3,899.6 L1097.2,898.6 L1097.8,897.4 L1098.1,896.0 L1098.1,894.4 L1098.0,892.6 L1097.7,890.8 L1097.4,889.0 L1097.2,887.3 L1097.2,885.6 L1097.4,884.2 L1097.9,882.9 L1098.7,881.7 L1099.6,880.8 L1100.8,879.9 L1102.0,879.1 L1103.2,878.3 L1104.3,877.4 L1105.2,876.4 L1105.8,875.2 L1106.2,873.8 L1106.3,872.3 L1106.1,870.6 L1105.8,868.7 L1105.4,866.8 L1105.0,865.0 L1104.7,863.1 L1104.6,861.4 L1104.7,859.8 L1105.0,858.4 L1105.5,857.2 L1106.3,856.0 L1107.1,855.0 L1108.0,854.0 L1108.8,852.9 L1109.5,851.8 L1110.1,850.5 L1110.4,849.1 L1110.5,847.6 L1110.4,845.8 L1110.1,844.0 L1109.7,842.1 L1109.2,840.2 L1108.7,838.2 L1108.3,836.3 L1108.0,834.4 L1107.7,832.7 L1107.6,830.9 L1107.4,829.2 L1107.2,827.4 L1106.6,825.4 L1104.0,822.0 L1104.0,822.0 L1099.2,820.4 L1096.8,820.4 L1095.0,820.7 L1093.4,821.3 L1092.1,822.0 L1090.8,822.8 L1089.5,823.5 L1088.1,824.2 L1086.6,824.8 L1085.0,825.3 L1083.2,825.7 L1081.3,826.0 L1079.3,826.3 L1077.4,826.6 L1075.5,827.0 L1073.8,827.5 L1072.3,828.1 L1071.0,828.8 L1070.0,829.7 L1069.2,830.8 L1068.5,832.0 L1068.0,833.3 L1067.4,834.5 L1066.8,835.7 L1066.0,836.8 L1065.0,837.8 L1063.8,838.5 L1062.3,839.2 L1060.7,839.7 L1058.8,840.0 L1056.9,840.4 L1055.1,840.7 L1053.3,841.2 L1051.8,841.7 L1050.5,842.5 L1049.4,843.4 L1048.7,844.5 L1048.2,845.8 L1047.8,847.2 L1047.6,848.6 L1047.3,850.1 L1047.0,851.5 L1046.4,852.7 L1045.6,853.8 L1044.5,854.7 L1043.2,855.4 L1041.7,856.0 L1040.0,856.5 L1038.2,856.9 L1036.5,857.4 L1035.0,857.9 L1033.6,858.6 L1032.5,859.5 L1031.7,860.6 L1031.2,861.9 L1030.9,863.3 L1030.8,864.8 L1030.7,866.4 L1030.7,868.0 L1030.5,869.5 L1030.1,870.9 L1029.5,872.1 L1028.7,873.2 L1027.6,874.1 L1026.4,874.9 L1025.1,875.6 L1023.7,876.3 L1022.4,877.0 L1021.2,877.8 L1020.3,878.8 L1019.6,880.0 L1019.2,881.3 L1019.0,882.8 L1019.0,884.5 L1019.2,886.2 L1019.4,888.0 L1019.6,889.7 L1019.8,891.5 L1019.8,893.1 L1019.7,894.7 L1019.5,896.2 L1019.3,897.6 L1019.0,899.1 L1018.8,900.5 L1018.7,902.1 L1019.0,903.9 L1019.7,906.0 L1021.0,908.6 L1023.5,911.9 L1036.0,922.0 Z" stroke-width="1.600"/>
<path d="M1100,828 C1090,850 1078,875 1062,900 M1084,858 L1074,852 M1078,872 L1090,870 M1070,886 L1060,880" stroke-width="1.200"/>
<!-- sprig bottom -->
<path d="M985,880 C984,895 982,908 978,920"/><ellipse cx="976" cy="888" rx="9" ry="4" transform="rotate(40 976 888)"/><ellipse cx="996" cy="888" rx="9" ry="4" transform="rotate(-25 996 888)"/><ellipse cx="972" cy="905" rx="8" ry="3.500" transform="rotate(20 972 905)"/><ellipse cx="994" cy="903" rx="8" ry="3.500" transform="rotate(-15 994 903)"/>
<path d="M950,944 C958,934 975,934 988,944 C978,954 962,956 950,944 Z M952,944 C964,944 976,944 986,944"/>
<path d="M1066,958 C1072,950 1082,952 1086,960 C1088,970 1084,980 1078,986 C1072,982 1068,976 1066,970 C1064,966 1064,962 1066,958 Z M1070,956 C1075,966 1077,976 1078,985"/>
<!-- corn bottom -->
<path d="M1146,870 C1156,860 1170,848 1188,838 C1196,836 1202,842 1204,850 C1200,860 1196,866 1190,872 C1180,880 1168,886 1156,888 C1150,884 1146,878 1146,870 Z"/>
<path d="M1152,872 C1158,874 1162,870 1162,866 C1168,868 1172,864 1172,860 C1178,862 1182,858 1182,854 C1188,856 1192,852 1192,848 M1158,882 C1164,884 1168,880 1168,876 C1174,878 1178,874 1178,870 C1184,872 1188,868 1188,864"/>
<!-- pear-ish behind arm -->
<path d="M1140,745 C1142,775 1144,800 1150,812 C1158,822 1170,818 1176,808" stroke-width="1.800"/>
<!-- pumpkin -->
<ellipse cx="1158" cy="940.5" rx="28" ry="18" transform="rotate(32 1158 940.5)" fill="#fff"/><ellipse cx="1144" cy="959.5" rx="28" ry="18" transform="rotate(32 1144 959.5)" fill="#fff"/><ellipse cx="1132" cy="978" rx="24" ry="17" transform="rotate(32 1132 978)" fill="#fff"/>
<path d="M1120,942 C1114,940 1112,934 1116,930 C1118,926 1122,928 1122,932 M1114,946 C1110,950 1110,954 1113,957"/>
<!-- big beet leaves -->
<path d="M816.0,801.0 L816.5,798.9 L816.8,797.0 L816.9,795.1 L816.8,793.5 L816.3,792.0 L815.6,790.7 L814.8,789.5 L814.0,788.3 L813.4,786.9 L813.2,785.3 L813.2,783.5 L813.4,781.6 L813.7,779.7 L813.8,777.9 L813.5,776.3 L812.8,775.1 L811.6,774.1 L810.2,773.2 L808.7,772.4 L807.4,771.5 L806.5,770.4 L806.0,769.0 L805.9,767.3 L806.0,765.4 L806.1,763.6 L806.0,761.9 L805.4,760.5 L804.3,759.5 L802.8,758.8 L801.0,758.2 L799.1,757.6 L797.5,756.9 L796.3,755.9 L795.6,754.6 L795.3,753.1 L795.2,751.4 L795.1,749.7 L794.7,748.2 L793.9,747.0 L792.5,746.1 L790.8,745.5 L788.9,745.0 L787.0,744.5 L785.3,743.8 L784.0,742.9 L783.1,741.7 L782.6,740.3 L782.1,738.9 L781.7,737.4 L780.9,736.1 L779.9,735.1 L778.5,734.2 L776.9,733.5 L775.1,732.9 L773.5,732.2 L772.0,731.4 L770.8,730.4 L769.9,729.3 L769.0,728.1 L768.0,727.0 L768.0,727.0 L768.1,728.7 L768.7,730.1 L769.4,731.3 L770.3,732.5 L771.0,733.8 L771.5,735.3 L771.7,736.9 L771.6,738.7 L771.4,740.6 L771.3,742.4 L771.3,744.1 L771.7,745.6 L772.5,746.9 L773.6,747.9 L774.9,748.8 L776.1,749.8 L777.0,751.0 L777.5,752.4 L777.6,754.1 L777.4,756.0 L777.0,757.9 L776.8,759.9 L776.9,761.5 L777.4,762.9 L778.5,764.0 L779.9,764.8 L781.5,765.5 L783.0,766.3 L784.1,767.4 L784.8,768.7 L785.0,770.3 L784.9,772.1 L784.7,774.0 L784.7,775.8 L785.0,777.3 L785.9,778.5 L787.2,779.4 L788.9,780.1 L790.6,780.6 L792.3,781.3 L793.7,782.2 L794.6,783.3 L795.1,784.7 L795.4,786.3 L795.6,787.9 L796.1,789.4 L796.8,790.7 L798.0,791.6 L799.6,792.4 L801.4,793.0 L803.3,793.5 L805.0,794.1 L806.5,794.9 L807.8,795.8 L808.8,796.9 L809.8,798.0 L810.8,799.1 L812.1,800.0 L813.7,800.7 L816.0,801.0 Z M816.0,801.0 L775.2,738.1" stroke-width="1.9"/>
<path d="M810.0,815.0 L809.3,812.4 L808.4,810.2 L807.4,808.3 L806.1,806.9 L804.7,805.9 L803.2,805.1 L801.8,804.2 L800.5,802.9 L799.4,801.1 L798.5,798.9 L797.6,796.7 L796.6,794.9 L795.3,793.7 L793.7,793.2 L791.9,793.1 L790.0,793.2 L788.3,793.0 L786.8,792.0 L785.7,790.4 L784.7,788.4 L783.8,786.3 L782.6,784.7 L781.1,783.9 L779.3,784.0 L777.2,784.6 L775.1,785.2 L773.2,785.4 L771.6,784.8 L770.3,783.4 L769.3,781.6 L768.2,779.8 L766.9,778.5 L765.3,778.1 L763.3,778.5 L761.0,779.4 L758.8,780.3 L756.8,780.7 L755.1,780.4 L753.7,779.3 L752.5,777.8 L751.3,776.4 L749.9,775.4 L748.1,775.2 L746.1,775.8 L743.8,776.7 L741.6,777.6 L739.6,778.0 L737.8,777.8 L736.3,777.1 L735.0,776.0 L733.5,775.0 L732.0,774.4 L730.1,774.4 L728.1,774.8 L726.0,775.4 L723.9,775.9 L722.0,776.1 L720.3,775.9 L718.7,775.4 L717.0,775.0 L717.0,775.0 L718.2,776.6 L719.6,777.5 L721.1,778.3 L722.6,779.0 L724.0,780.1 L725.1,781.7 L726.1,783.6 L727.1,785.7 L728.1,787.5 L729.4,788.9 L730.9,789.6 L732.7,789.8 L734.4,790.0 L736.1,790.4 L737.5,791.5 L738.5,793.3 L739.4,795.5 L740.3,797.8 L741.3,799.7 L742.6,800.8 L744.3,801.2 L746.2,801.1 L748.1,800.8 L749.9,801.0 L751.4,801.9 L752.5,803.5 L753.4,805.7 L754.3,807.9 L755.4,809.6 L756.8,810.5 L758.6,810.6 L760.7,810.1 L762.8,809.5 L764.7,809.4 L766.2,810.0 L767.5,811.4 L768.5,813.3 L769.6,815.1 L770.8,816.4 L772.4,816.9 L774.4,816.7 L776.5,815.9 L778.7,815.1 L780.7,814.8 L782.4,815.1 L783.9,816.0 L785.2,817.3 L786.5,818.4 L788.0,819.2 L789.8,819.2 L791.9,818.7 L794.1,817.8 L796.3,817.0 L798.4,816.4 L800.2,816.3 L802.0,816.6 L803.7,816.8 L805.5,816.9 L807.5,816.4 L810.0,815.0 Z M810.0,815.0 L731.0,781.0" stroke-width="1.9"/>
<path d="M806.0,824.0 L804.6,822.5 L803.1,821.3 L801.7,820.3 L800.4,819.7 L799.0,819.4 L797.7,819.4 L796.4,819.5 L795.1,819.6 L793.7,819.4 L792.4,818.9 L791.0,818.0 L789.6,816.8 L788.2,815.7 L786.8,814.7 L785.4,814.2 L784.1,814.2 L782.8,814.7 L781.5,815.6 L780.3,816.5 L779.0,817.2 L777.7,817.5 L776.3,817.2 L775.0,816.5 L773.6,815.5 L772.2,814.5 L770.8,813.8 L769.5,813.6 L768.2,814.0 L766.9,815.0 L765.7,816.3 L764.5,817.7 L763.2,818.7 L761.9,819.3 L760.6,819.3 L759.3,818.8 L757.9,818.1 L756.5,817.4 L755.1,817.0 L753.8,817.1 L752.6,817.8 L751.3,819.0 L750.1,820.5 L748.9,821.9 L747.7,823.1 L746.4,823.7 L745.1,823.9 L743.7,823.8 L742.4,823.4 L741.0,823.1 L739.7,823.1 L738.4,823.5 L737.2,824.3 L735.9,825.4 L734.7,826.6 L733.5,827.8 L732.2,828.6 L730.9,829.2 L729.6,829.5 L728.3,829.7 L727.0,830.0 L727.0,830.0 L728.4,830.7 L729.7,830.9 L731.0,830.8 L732.4,830.7 L733.7,830.7 L735.0,831.0 L736.4,831.6 L737.8,832.5 L739.2,833.6 L740.6,834.6 L742.0,835.4 L743.3,835.8 L744.7,835.7 L745.9,835.3 L747.2,834.6 L748.5,834.0 L749.8,833.8 L751.1,834.0 L752.5,834.7 L753.9,835.9 L755.4,837.2 L756.8,838.3 L758.1,839.0 L759.5,839.2 L760.8,838.8 L762.0,837.9 L763.3,836.9 L764.5,836.0 L765.8,835.5 L767.1,835.6 L768.5,836.1 L769.9,837.1 L771.3,838.2 L772.7,839.1 L774.1,839.6 L775.4,839.4 L776.7,838.7 L777.9,837.5 L779.1,836.3 L780.4,835.1 L781.6,834.4 L782.9,834.1 L784.3,834.3 L785.6,834.9 L787.0,835.4 L788.4,835.8 L789.7,835.7 L791.0,835.2 L792.2,834.2 L793.4,832.9 L794.6,831.5 L795.9,830.2 L797.1,829.3 L798.4,828.7 L799.7,828.3 L801.0,828.0 L802.3,827.6 L803.6,827.0 L804.8,825.9 L806.0,824.0 Z M806.0,824.0 L738.9,829.1" stroke-width="1.9"/>
<path d="M810,806 C802,820 802,842 812,852 C816,856 820,858 826,858" stroke-width="1.900"/>
<!-- cauliflower -->
<path d="M770,905 C776,896 790,896 796,904 C804,902 810,910 806,918 M770,905 C760,904 752,912 756,922 C748,926 746,938 754,944 C750,952 754,962 762,964 C762,974 772,982 782,978 C786,984 796,986 802,980 M772,920 C776,916 782,916 786,920 M766,940 C770,938 774,940 776,944"/>
<!-- shapes behind arm -->
<path d="M928,872 C944,880 952,898 946,908 C940,914 930,912 922,910" stroke-width="2"/>
<path d="M918,968 C936,962 954,972 958,990 C960,1000 956,1008 950,1012"/>
</g>
<g fill="#a7c0b6" stroke="none">
<path d="M1016,191 C1012,180 1022,172 1032,175 C1040,178 1042,186 1037,191 C1031,188 1024,190 1019,196 Z M1028,191 L1036,189 C1037,196 1041,200 1039,205 C1035,209 1028,205 1030,199 Z"/><circle cx="1019.500" cy="192" r="1.600" fill="#fff"/>
<path d="M754,872 C750,864 756,858 764,860 C762,866 764,870 768,874 C772,870 774,866 778,868 C780,876 772,884 764,884 C758,884 754,878 754,872 Z M764,862 C766,856 772,854 776,858 C776,864 772,870 768,874 Z"/><circle cx="757" cy="871" r="1.500" fill="#fff"/>
<path d="M1007,968 C1010,962 1020,962 1026,968 L1034,977 C1038,972 1044,968 1050,966 C1056,974 1056,988 1050,998 C1044,1006 1034,1008 1026,1004 C1022,1000 1026,994 1024,988 C1020,980 1010,976 1007,968 Z"/><path d="M1040,972 L1046,967 L1049,972 Z" fill="#fff"/>
</g>
<!--VEGEND-->
<!-- blob + arcs -->
<path d="M757,505 C757.7,491.3 759.7,473.2 766,458 C772.3,442.8 782.8,428.0 795,414 C807.2,400.0 825.7,383.3 839,374 C852.3,364.7 864.0,362.0 875,358 C886.0,354.0 892.5,352.2 905,350 C917.5,347.8 934.2,346.2 950,345 C965.8,343.8 986.5,343.2 1000,343 C1013.5,342.8 1020.0,341.2 1031,344 C1042.0,346.8 1055.2,352.2 1066,360 C1076.8,367.8 1088.0,378.5 1096,391 C1104.0,403.5 1110.1,418.5 1114,435 C1117.9,451.5 1119.5,471.7 1119.5,490 C1119.5,508.3 1118.1,526.7 1114,545 C1109.9,563.3 1103.7,582.5 1095,600 C1086.3,617.5 1074.5,636.3 1062,650 C1049.5,663.7 1030.7,674.8 1020,682 C1009.3,689.2 1007.7,690.8 998,693 C988.3,695.2 975.0,696.0 962,695.5 C949.0,695.0 935.3,693.9 920,690 C904.7,686.1 884.2,678.7 870,672 C855.8,665.3 846.3,658.5 835,650 C823.7,641.5 811.7,633.7 802,621 C792.3,608.3 783.7,587.5 777,574 C770.3,560.5 765.3,551.5 762,540 C758.7,528.5 756.3,518.7 757,505 Z" fill="#add0bf"/>
<circle cx="1206" cy="112" r="104" fill="none" stroke="#add1c0" stroke-width="16"/>
<path d="M782,987 C760,990 742,1010 738,1035 C735,1055 742,1070 750,1080" fill="none" stroke="#add0c0" stroke-width="9"/>
<path d="M709,1008 C722,1012 735,1020 742,1030" fill="none" stroke="#add0c0" stroke-width="8"/>
<!-- left arm + hand -->
<ellipse cx="872" cy="632" rx="21" ry="26.5" fill="#1f4a39"/><rect x="848.8" y="622.5" width="5" height="8" rx="2" fill="#1f4a39"/>
<path d="M876,370 C882,371 889,380 892,392 L905,430 L905,560 L1000,560 C1001,570 996,578 985,582 C975,587 965,592 961,600 L964,643 L956,664 L910,1066 L764,1066 L868,650 L881,609 C884,595 884,585 881,575 C876,560 866,540 864,515 C862,495 869,480 869,460 C869,430 868,395 870,380 C871,373 873,370 876,370 Z" fill="#f0908d"/>
<path d="M957,591.5 L978,586 L964,606 Z" fill="#e57b7c"/>
<path d="M873,446 L885,443 M875,452 L884,450 M932,598 L930,604" stroke="#d9797a" stroke-width=".8" fill="none"/>
<!-- watch -->
<path d="M876.500,622 L961,640.500 C965,641.5 966.5,644 965.5,647.5 L962,660.5 C961,663.5 958.5,664.5 955,663.6 L866.500,648 Z" fill="#113427"/>
<!-- phone -->
<rect x="899.3" y="321.2" width="130.4" height="239.5" rx="9" fill="#2c5544"/>
<rect x="909.4" y="330" width="110.2" height="221.7" rx="3" fill="#fefefe"/>
<path d="M903.5,362 V400 M1025.5,362 V380" stroke="#4e7866" stroke-width="2" stroke-linecap="round"/>
<rect x="928" y="392" width="70.4" height="82.7" rx="5" fill="#235343"/>
<rect x="926.5" y="491.3" width="76" height="27.7" rx="13.85" fill="#235343"/>
<g fill="#1f4d3d" font-family="'Liberation Serif',serif" font-style="italic" font-weight="700">
<text x="946" y="359" font-size="15" transform="rotate(-7 946 359)" letter-spacing="-.4">Perfect</text>
<text x="953" y="371.5" font-size="15" transform="rotate(-5 953 371)" letter-spacing="-.2">Bite</text>
</g>
<path d="M979.300,361.300 c1.500,-2.600 5,-.800 3.400,1.800 l-3.200,3.600 l-2.800,-3.600 c-1,-2.600 2,-3.600 2.600,-1.800 z" fill="#f3dc9a" stroke="#e2b04a" stroke-width=".9"/><path d="M971,371 C980,371.500 988.500,366 988.300,358 C988.200,354 985.500,352.300 982.500,353.300" fill="none" stroke="#1f4d3d" stroke-width="1.300" stroke-linecap="round"/>
<text x="955.200" y="377.900" font-size="3.200" font-weight="700" fill="#222" font-family="'Liberation Sans',sans-serif">A Bite Of Health</text>
<g fill="none" stroke="#ffffff" stroke-width="1.650" stroke-linecap="round" stroke-linejoin="round">
<path d="M954,414.5 H947 C944.5,414.5 942.6,416.4 942.6,419 V452.5 C942.6,455 944.5,457 947,457 H966 M968.5,414.5 H975.5 C978,414.5 979.8,416.4 979.8,419 V437"/>
<rect x="953.5" y="410.3" width="15.5" height="6" rx="2"/>
<path d="M949.5,424.5 H973 M949.5,430.5 H968 M949.5,436.5 H963"/>
<circle cx="954.5" cy="446" r="4.4"/><path d="M952.5,446 L954,447.7 L957,444.5"/>
<path d="M977.5,439.5 C972,436.5 965.5,441 965.8,449 C966,456 971,461 977.5,459.5 C984,461 989,456 989.2,449 C989.5,441 983,436.500 977.500,439.500 Z" fill="#235343"/>
<path d="M977.5,439.5 C977.500,437 978,435 979.500,433.500 M978.500,437.500 C980,434 984,433 986.500,434 C985.500,437 981.500,438.500 978.500,437.500 Z"/>
</g>
<!-- fingers -->
<g fill="#f0908d">
<path d="M1029,390 C1033,386 1042,384 1047,388 C1050.500,393 1047,400 1041,404.500 L1029,412 Z"/>
<path d="M1014,418 C1012,410 1020,405 1027,409 L1041,425 C1046,432 1046,440 1042,446 L1031,457 L1029,448 C1022,440 1016,428 1014,418 Z"/>
<path d="M1011,478 C1009,470 1017,465 1024,469 L1042,487 C1047,493 1045,500 1040,504 L1031,510 L1029,503 C1021,497 1014,488 1011,478 Z"/>
<path d="M1005,528 C1004,521 1011,517 1018,520 L1033,531 C1039,536 1037,542 1033,545 L1029,549 L1020,545 C1012,540 1007,534 1005,528 Z"/>
</g>
</g>
<!-- right hand (selected) -->
<use href="#rh" fill="#f0908d"/>
<g fill="none" stroke="#4d5cf2" stroke-width="1.1" stroke-linejoin="round">
<path d="M1033.800,622 C1031,632 1033,645 1040,649 L1046,649 Z" fill="#e66a6d" stroke="none"/><use href="#rh"/>
<path d="M961.500,499 L1049,650 M983,498 L1070,603"/>
<path d="M1020.200,557 L1043,554 L1073,606 L1044.700,627.700 Z"/>
<path d="M1070.500,573.300 L1092,563.800 L1123.500,610 L1088,637 Z"/>
<path d="M995.700,604.600 L1107,600 M1002.500,608.700 L1030,610 L1016,619 Z"/>
<path d="M1030,556 C1040,552 1046,562 1043,572 M1093,572 L1108,590 M1101,571 L1112,592"/>
<path d="M1033.800,622 C1031,632 1033,645 1040,649"/>
<path d="M1148,711.400 L1209,727 L1224,742.700 L1130.300,744.600 Z"/>
<path d="M1001,543.500 C1004,541 1008,540 1011,540.500 M1004,549 C1007,547 1010,546 1014,546" stroke-width="1.3"/>
</g>
<rect x="709.5" y="145.5" width="518" height="921" fill="none" stroke="#0d0d0d" stroke-width="1"/>
<!-- selection box -->
<rect x="961.500" y="491.500" width="421" height="573" fill="none" stroke="#4d5cf2" stroke-width="1.300"/>
<g fill="#ffffff" stroke="#4d5cf2" stroke-width="1"><rect x="958.500" y="488.500" width="6" height="6"/><rect x="1168.500" y="488.500" width="6" height="6"/><rect x="1379.500" y="488.500" width="6" height="6"/><rect x="958.500" y="774.500" width="6" height="6"/><rect x="1379.500" y="774.500" width="6" height="6"/><rect x="958.500" y="1061.500" width="6" height="6"/><rect x="1168.500" y="1061.500" width="6" height="6"/><rect x="1379.500" y="1061.500" width="6" height="6"/></g>
</svg>

<!-- align panel -->
<div class="abs" style="left:194px;top:430px;width:327px;height:285px;background:#535353;border-radius:4px 4px 0 0;box-shadow:0 0 0 1px #3d3d3d,0 2px 7px rgba(0,0,0,.45)"></div>
<div class="abs" style="left:194px;top:430px;width:327px;height:17px;background:#444;border-radius:4px 4px 0 0"></div>
<div class="abs" style="left:194px;top:447px;width:327px;height:36px;background:#474747;border-bottom:1px solid #3e3e3e"></div>
<div class="abs" style="left:263.5px;top:447px;width:66.5px;height:37px;background:#535353;border-left:1px solid #3c3c3c;border-right:1px solid #3c3c3c"></div>
<div class="abs" style="left:398.5px;top:447px;width:1px;height:36px;background:#3e3e3e"></div>
<div class="abs" style="left:467px;top:447px;width:1px;height:36px;background:#3e3e3e"></div>
<svg class="abs" style="left:200.5px;top:435px" width="10" height="10"><path d="M1 1 L9 9 M9 1 L1 9" stroke="#d4d4d4" stroke-width="1.3"/></svg>
<svg class="abs" style="left:501px;top:436px" width="12" height="8"><path d="M4.5 0.8 L1.5 4 L4.5 7.2 M9.5 0.8 L6.5 4 L9.5 7.2" fill="none" stroke="#d4d4d4" stroke-width="1.1"/></svg>
<div class="abs" style="left:195px;top:448px;width:68.5px;height:34px;overflow:hidden"><span class="t" style="left:12.3px;top:10.15px;font-size:14px;color:#c4c4c4;font-weight:700;letter-spacing:-0.274px;">Transform</span></div>
<svg class="abs" style="left:268px;top:459px" width="9" height="12"><path d="M1.5 4.6 L4.5 1.5 L7.5 4.6 M1.5 7.4 L4.5 10.5 L7.5 7.4" fill="none" stroke="#bcbcbc" stroke-width="1"/></svg>
<span class="t" style="left:283px;top:458.15px;font-size:14px;color:#f4f4f4;font-weight:700;letter-spacing:0.100px;">Align</span>
<div class="abs" style="left:331px;top:448px;width:67px;height:34px;overflow:hidden"><span class="t" style="left:11px;top:10.15px;font-size:14px;color:#c4c4c4;font-weight:700;letter-spacing:0.277px;">Pathfinder</span></div>
<div class="abs" style="left:400px;top:448px;width:67px;height:34px;overflow:hidden"><span class="t" style="left:10px;top:10.15px;font-size:14px;color:#c4c4c4;font-weight:700;letter-spacing:0.115px;">Gradient</span></div>
<svg class="abs" style="left:499px;top:461px" width="14" height="11"><path d="M0 1 H14 M0 5.5 H14 M0 10 H14" stroke="#cfcfcf" stroke-width="1.3"/></svg>
<span class="t" style="left:201.5px;top:495.15px;font-size:14px;color:#e0e0e0;letter-spacing:0.259px;">Align Objects:</span>
<svg class="abs" style="left:207.3px;top:523px" width="24" height="26"><use href="#alL"/></svg>
<svg class="abs" style="left:254.3px;top:523px" width="24" height="26"><use href="#alC"/></svg>
<svg class="abs" style="left:301.8px;top:523px" width="24" height="26"><use href="#alR"/></svg>
<svg class="abs" style="left:387.6px;top:524px" width="26" height="24"><use href="#alT"/></svg>
<svg class="abs" style="left:435.4px;top:524px" width="26" height="24"><use href="#alM"/></svg>
<svg class="abs" style="left:483px;top:524px" width="26" height="24"><use href="#alB"/></svg>
<span class="t" style="left:201.5px;top:572.55px;font-size:14px;color:#e0e0e0;letter-spacing:0.349px;">Distribute Objects:</span>
<svg class="abs" style="left:200px;top:598px" width="316" height="30" viewBox="200 598 316 30" fill="#cacaca" stroke="none">
<g stroke="#cdcdcd" stroke-width="1.2"><path d="M207 603.2 H231 M207 615.4 H231 M255 607.3 H278.7 M255 619.6 H278.7 M303 610.4 H326.7 M303 623 H326.7 M390 601.7 V625.2 M403.7 601.7 V625.2 M442.1 601.7 V625.2 M454.7 601.7 V625.2 M494.4 601.7 V625.2 M506.5 601.7 V625.2"/></g>
<rect x="214.3" y="605.3" width="12" height="5.2"/><rect x="210.8" y="617.4" width="15.8" height="6.1"/>
<rect x="262.4" y="604.5" width="9.3" height="5.8"/><rect x="259" y="616.5" width="15.8" height="6.2"/>
<rect x="310.4" y="603.3" width="9.6" height="4.6"/><rect x="306.6" y="615" width="16.4" height="6.3"/>
<rect x="392.5" y="605.5" width="6" height="16.3"/><rect x="405.8" y="608" width="5.2" height="10.4"/>
<rect x="439" y="605.5" width="6.3" height="16.3"/><rect x="451.5" y="608" width="6.3" height="10.4"/>
<rect x="485.9" y="605.5" width="6.3" height="16.3"/><rect x="499" y="608" width="5.2" height="10.4"/>
</svg>
<span class="t" style="left:201.5px;top:649.85px;font-size:14px;color:#e0e0e0;letter-spacing:0.236px;">Distribute Spacing:</span>
<span class="t" style="left:396px;top:649.85px;font-size:14px;color:#e0e0e0;letter-spacing:0.505px;">Align To:</span>
<div class="abs" style="left:398px;top:675px;width:31.5px;height:31.5px;border-radius:3px;background:#2c2c2c"></div>
<div class="abs" style="left:286px;top:677px;width:81px;height:26.5px;background:#585858;border-radius:2px"></div>
<div class="abs" style="left:308px;top:677px;width:1px;height:26.5px;background:#525252"></div>
<svg class="abs" style="left:291px;top:680px" width="12" height="20"><path d="M1.5 6.5 L6 2 L10.5 6.5 M1.5 13.5 L6 18 L10.5 13.5" fill="none" stroke="#666" stroke-width="1.3"/></svg>
<span class="t" style="left:314px;top:684.15px;font-size:14px;color:#626262;letter-spacing:0.660px;">0 pt</span>
<svg class="abs" style="left:200px;top:674px" width="316" height="34" viewBox="200 674 316 34" fill="#cacaca" stroke="none">
<rect x="215.5" y="682" width="10.3" height="6.8"/><rect x="213.8" y="693" width="16" height="7"/><path d="M208.8 686 V697.4 M206.5 689.6 H211 M206.5 693.4 H211" stroke="#cdcdcd" stroke-width="1.2"/>
<rect x="251" y="686" width="6" height="15.4"/><rect x="262" y="687.6" width="7.6" height="9.8"/><path d="M254 680.3 H264.5 M256.8 678.2 V683 M261.2 678.2 V683" stroke="#cdcdcd" stroke-width="1.2"/>
<path d="M407.3 679.5 V685.5 M404.3 683 H409" stroke="#e6e6e6" stroke-width="1.2"/><path d="M407.6 686 H415.4 L420 690.6 V697.4 H407.6 Z" fill="#9a9a9a" stroke="#ececec" stroke-width="1.3"/><path d="M415.4 686 V690.6 H420" fill="#ececec" stroke="#ececec" stroke-width=".8"/>
<g stroke="#cdcdcd" stroke-width="1" stroke-dasharray="2 1.6" fill="none"><rect x="447" y="683.3" width="16" height="15.4"/><rect x="488.3" y="683.3" width="16.4" height="15.4"/></g>
<g><rect x="445.8" y="682" width="2.6" height="2.6"/><rect x="453.7" y="682" width="2.6" height="2.6"/><rect x="461.7" y="682" width="2.6" height="2.6"/><rect x="445.8" y="689.7" width="2.6" height="2.6"/><rect x="461.7" y="689.7" width="2.6" height="2.6"/><rect x="445.8" y="697.4" width="2.6" height="2.6"/><rect x="453.7" y="697.4" width="2.6" height="2.6"/><rect x="461.7" y="697.4" width="2.6" height="2.6"/><rect x="453.9" y="689.9" width="2.2" height="2.2"/>
<rect x="487" y="682" width="2.6" height="2.6"/><rect x="495.2" y="682" width="2.6" height="2.6"/><rect x="503.4" y="682" width="2.6" height="2.6"/><rect x="487" y="689.7" width="2.6" height="2.6"/><rect x="503.4" y="689.7" width="2.6" height="2.6"/><rect x="487" y="697.4" width="2.6" height="2.6"/><rect x="495.2" y="697.4" width="2.6" height="2.6"/><rect x="503.4" y="697.4" width="2.6" height="2.6"/></g>
<path d="M490.5 684.8 L498.5 692" stroke="#cdcdcd" stroke-width="2"/><circle cx="499.8" cy="693.3" r="2.7" fill="#535353" stroke="#cdcdcd" stroke-width="1.4"/>
</svg>

<!-- layers panel -->
<div class="abs" style="left:1904px;top:93px;width:16px;height:36px;background:#474747"></div>
<div class="abs" style="left:1904px;top:129px;width:16px;height:951px;background:linear-gradient(90deg,#444 0,#505050 3px,#575757 5px)"></div>
<div class="abs" style="left:1537px;top:131px;width:1px;height:949px;background:#444"></div>
<div class="abs" style="left:1538px;top:75px;width:366px;height:1002px;background:#535353;border-radius:5px 5px 0 0;box-shadow:0 0 0 1px #3a3a3a, 0 2px 6px rgba(0,0,0,.35)"></div>
<div class="abs" style="left:1538px;top:75px;width:366px;height:18px;background:#424242;border-radius:5px 5px 0 0"></div>
<div class="abs" style="left:1538px;top:93px;width:366px;height:36px;background:#474747;border-bottom:1px solid #3c3c3c"></div>
<div class="abs" style="left:1633px;top:93px;width:68px;height:36px;background:#535353;border-left:1px solid #3c3c3c;border-right:1px solid #3c3c3c"></div>
<div class="abs" style="left:1785px;top:93px;width:1px;height:35px;background:#3e3e3e"></div>
<svg class="abs" style="left:1544px;top:80px" width="10" height="10"><path d="M1 1 L9 9 M9 1 L1 9" stroke="#d4d4d4" stroke-width="1.4"/></svg>
<svg class="abs" style="left:1885px;top:81px" width="12" height="8"><path d="M4.5 0.8 L1.5 4 L4.5 7.2 M9.5 0.8 L6.5 4 L9.5 7.2" fill="none" stroke="#d4d4d4" stroke-width="1.1"/></svg>
<span class="t" style="left:1550.5px;top:102.65px;font-size:14px;color:#bdbdbd;font-weight:700;letter-spacing:0.075px;">Properties</span>
<span class="t" style="left:1645px;top:102.65px;font-size:14px;color:#f2f2f2;font-weight:700;letter-spacing:-0.109px;">Layers</span>
<span class="t" style="left:1713.5px;top:102.65px;font-size:14px;color:#bdbdbd;font-weight:700;letter-spacing:0.095px;">Libraries</span>
<svg class="abs" style="left:1883px;top:106px" width="14" height="11"><path d="M0 1 H14 M0 5.5 H14 M0 10 H14" stroke="#cfcfcf" stroke-width="1.3"/></svg>
<div class="abs" style="left:1554px;top:143.5px;width:304px;height:30px;background:#434343;border:1px solid #5e5e5e;border-radius:3px"></div>
<svg class="abs" style="left:1561px;top:150px" width="18" height="18" viewBox="0 0 18 18"><circle cx="6.8" cy="6.8" r="5" fill="none" stroke="#d6d6d6" stroke-width="1.4"/><path d="M10.5 10.5 L16 16" stroke="#d6d6d6" stroke-width="1.7" stroke-linecap="round"/></svg>
<span class="t" style="left:1591px;top:151.23px;font-size:14.5px;color:#d6d6d6;font-style:italic;letter-spacing:-0.256px;">Search All</span>
<svg class="abs" style="left:1871px;top:149px" width="19" height="19" viewBox="0 0 19 19"><path d="M0.5 0.5 H18.5 L11.3 9.3 V16.5 L7.8 18.6 V9.3 Z" fill="#d8d8d8"/></svg>
<div class="abs" style="left:1546px;top:185px;width:351px;height:855px;border:1px solid #5b5b5b"></div>
<div class="abs" style="left:1547px;top:186.2px;width:349px;height:28px;background:#535353;border-bottom:1px solid #484848"></div>
<div class="abs" style="left:1573px;top:186.2px;width:1px;height:28px;background:#4a4a4a"></div><div class="abs" style="left:1600.5px;top:186.2px;width:1px;height:28px;background:#4a4a4a"></div><div class="abs" style="left:1610.5px;top:186.2px;width:1px;height:28px;background:#4a4a4a"></div><div class="abs" style="left:1848px;top:186.2px;width:1px;height:28px;background:#4a4a4a"></div>
<div class="abs" style="left:1603.8px;top:187.7px;width:4.6px;height:25px;background:#4b4ef2"></div>
<svg class="abs" style="left:1618.5px;top:194.7px" width="7" height="11"><path d="M1.2 0.800 L5.800 5.500 L1.200 10.200" fill="none" stroke="#e4e4e4" stroke-width="1.400" stroke-linecap="round" stroke-linejoin="round"/></svg>
<svg class="abs" style="left:1642.5px;top:187.8px" width="24" height="24.4" viewBox="0 0 24 24.4"><rect x="0.8" y="0.8" width="22.4" height="22.8" fill="#fff" stroke="#0c0c0c" stroke-width="1.6"/><path d="M3 8.5 H22" stroke="#444" stroke-width="1.2"/></svg>
<span class="t" style="left:1673.3px;top:193.27px;font-size:14.8px;color:#e2e2e2;letter-spacing:-0.480px;">Layer 4</span>
<div class="abs" style="left:1857px;top:194.9px;width:10.6px;height:10.6px;border-radius:50%;border:1.3px solid #d2d2d2"></div>
<div class="abs" style="left:1547px;top:214.2px;width:349px;height:28px;background:#4c5e7b;border-bottom:1px solid #484848"></div>
<div class="abs" style="left:1603.8px;top:215.7px;width:4.6px;height:25px;background:#4b4ef2"></div>
<svg class="abs" style="left:1551px;top:222.0px" width="16.4" height="12.4" viewBox="0 0 18 14"><path d="M1.2 7 C4 2.2 14 2.2 16.800 7 C14 11.800 4 11.800 1.200 7 Z" fill="none" stroke="#d4d4d4" stroke-width="2.1"/><circle cx="9" cy="6.800" r="3.300" fill="#d4d4d4"/><circle cx="7.900" cy="5.900" r="1.100" fill="#4c5e7b"/></svg>
<svg class="abs" style="left:1618.5px;top:222.7px" width="7" height="11"><path d="M1.2 0.800 L5.800 5.500 L1.200 10.200" fill="none" stroke="#e4e4e4" stroke-width="1.400" stroke-linecap="round" stroke-linejoin="round"/></svg>
<svg class="abs" style="left:1642.5px;top:215.8px" width="24" height="24.4" viewBox="0 0 24 24.4"><rect x="0.8" y="0.8" width="22.4" height="22.8" fill="#fff" stroke="#0c0c0c" stroke-width="1.6"/><path d="M5 3 L8 4 L10 7 L20 18 L18.5 21 L16 19 L8 9 Z" fill="#ee8a88"/></svg>
<span class="t" style="left:1673.3px;top:221.27px;font-size:14.8px;color:#e2e2e2;letter-spacing:-0.480px;">Layer 5</span>
<div class="abs" style="left:1857px;top:222.9px;width:10.6px;height:10.6px;border-radius:50%;border:1.3px solid #d2d2d2"></div>
<div class="abs" style="left:1876px;top:222.6px;width:11.2px;height:11.2px;background:#4b4ef2;border:1.3px solid #0a0a0a"></div>
<svg class="abs" style="left:1888px;top:214.8px" width="8.5" height="8.5"><path d="M0 0 H8.5 V8.5 Z" fill="#e4e4e4"/></svg>
<div class="abs" style="left:1547px;top:242.2px;width:349px;height:28px;background:#535353;border-bottom:1px solid #484848"></div>
<div class="abs" style="left:1573px;top:242.2px;width:1px;height:28px;background:#4a4a4a"></div><div class="abs" style="left:1600.5px;top:242.2px;width:1px;height:28px;background:#4a4a4a"></div><div class="abs" style="left:1610.5px;top:242.2px;width:1px;height:28px;background:#4a4a4a"></div><div class="abs" style="left:1848px;top:242.2px;width:1px;height:28px;background:#4a4a4a"></div>
<div class="abs" style="left:1603.8px;top:243.7px;width:4.6px;height:25px;background:#ea55ee"></div>
<svg class="abs" style="left:1551px;top:250.0px" width="16.4" height="12.4" viewBox="0 0 18 14"><path d="M1.2 7 C4 2.2 14 2.2 16.800 7 C14 11.800 4 11.800 1.200 7 Z" fill="none" stroke="#d4d4d4" stroke-width="2.1"/><circle cx="9" cy="6.800" r="3.300" fill="#d4d4d4"/><circle cx="7.900" cy="5.900" r="1.100" fill="#535353"/></svg>
<svg class="abs" style="left:1618.5px;top:250.7px" width="7" height="11"><path d="M1.2 0.800 L5.800 5.500 L1.200 10.200" fill="none" stroke="#e4e4e4" stroke-width="1.400" stroke-linecap="round" stroke-linejoin="round"/></svg>
<svg class="abs" style="left:1642.5px;top:243.8px" width="24" height="24.4" viewBox="0 0 24 24.4"><rect x="0.8" y="0.8" width="22.4" height="22.8" fill="#fff" stroke="#0c0c0c" stroke-width="1.6"/><path d="M11 3 h4 v6 h-4z" fill="#cfe0d8" stroke="#777" stroke-width=".6"/><path d="M10.5 10 L14.5 10.5 L12 22 H8 Z" fill="#ee8a88"/><path d="M10 9.6 h5" stroke="#222" stroke-width="1.2"/></svg>
<span class="t" style="left:1673.3px;top:249.27px;font-size:14.8px;color:#e2e2e2;letter-spacing:-0.480px;">Layer 6</span>
<div class="abs" style="left:1857px;top:250.9px;width:10.6px;height:10.6px;border-radius:50%;border:1.3px solid #d2d2d2"></div>
<div class="abs" style="left:1547px;top:270.2px;width:349px;height:28px;background:#535353;border-bottom:1px solid #484848"></div>
<div class="abs" style="left:1573px;top:270.2px;width:1px;height:28px;background:#4a4a4a"></div><div class="abs" style="left:1600.5px;top:270.2px;width:1px;height:28px;background:#4a4a4a"></div><div class="abs" style="left:1610.5px;top:270.2px;width:1px;height:28px;background:#4a4a4a"></div><div class="abs" style="left:1848px;top:270.2px;width:1px;height:28px;background:#4a4a4a"></div>
<div class="abs" style="left:1603.8px;top:271.7px;width:4.6px;height:25px;background:#62ecf4"></div>
<svg class="abs" style="left:1551px;top:278.0px" width="16.4" height="12.4" viewBox="0 0 18 14"><path d="M1.2 7 C4 2.2 14 2.2 16.800 7 C14 11.800 4 11.800 1.200 7 Z" fill="none" stroke="#d4d4d4" stroke-width="2.1"/><circle cx="9" cy="6.800" r="3.300" fill="#d4d4d4"/><circle cx="7.900" cy="5.900" r="1.100" fill="#535353"/></svg>
<svg class="abs" style="left:1581px;top:276.2px" width="13" height="15" viewBox="0 0 13 15"><path d="M3.2 7 V4.6 C3.2 0.8 9.8 0.8 9.8 4.6 V7" fill="none" stroke="#d0d0d0" stroke-width="1.7"/><rect x="0.8" y="6.6" width="11.4" height="7.8" fill="#d0d0d0"/><path d="M6.5 9 V12" stroke="#535353" stroke-width="1.6" stroke-linecap="round"/></svg>
<svg class="abs" style="left:1618.5px;top:278.7px" width="7" height="11"><path d="M1.2 0.800 L5.800 5.500 L1.200 10.200" fill="none" stroke="#e4e4e4" stroke-width="1.400" stroke-linecap="round" stroke-linejoin="round"/></svg>
<svg class="abs" style="left:1642.5px;top:271.8px" width="24" height="24.4" viewBox="0 0 24 24.4"><rect x="0.8" y="0.8" width="22.4" height="22.8" fill="#fff" stroke="#0c0c0c" stroke-width="1.6"/><path d="M3 13 C6 15 8 13 9 9 C11 6 17 7 19 10 C21 13 20 17 20 20" fill="none" stroke="#a9cfc0" stroke-width="2.4"/></svg>
<span class="t" style="left:1673.3px;top:277.27px;font-size:14.8px;color:#e2e2e2;letter-spacing:-0.480px;">Layer 7</span>
<div class="abs" style="left:1857px;top:278.9px;width:10.6px;height:10.6px;border-radius:50%;border:1.3px solid #d2d2d2"></div>
<div class="abs" style="left:1547px;top:298.2px;width:349px;height:28px;background:#535353;border-bottom:1px solid #484848"></div>
<div class="abs" style="left:1573px;top:298.2px;width:1px;height:28px;background:#4a4a4a"></div><div class="abs" style="left:1600.5px;top:298.2px;width:1px;height:28px;background:#4a4a4a"></div><div class="abs" style="left:1610.5px;top:298.2px;width:1px;height:28px;background:#4a4a4a"></div><div class="abs" style="left:1848px;top:298.2px;width:1px;height:28px;background:#4a4a4a"></div>
<div class="abs" style="left:1603.8px;top:299.7px;width:4.6px;height:25px;background:#f2f254"></div>
<svg class="abs" style="left:1551px;top:306.0px" width="16.4" height="12.4" viewBox="0 0 18 14"><path d="M1.2 7 C4 2.2 14 2.2 16.800 7 C14 11.800 4 11.800 1.200 7 Z" fill="none" stroke="#d4d4d4" stroke-width="2.1"/><circle cx="9" cy="6.800" r="3.300" fill="#d4d4d4"/><circle cx="7.900" cy="5.900" r="1.100" fill="#535353"/></svg>
<svg class="abs" style="left:1581px;top:304.2px" width="13" height="15" viewBox="0 0 13 15"><path d="M3.2 7 V4.6 C3.2 0.8 9.8 0.8 9.8 4.6 V7" fill="none" stroke="#d0d0d0" stroke-width="1.7"/><rect x="0.8" y="6.6" width="11.4" height="7.8" fill="#d0d0d0"/><path d="M6.5 9 V12" stroke="#535353" stroke-width="1.6" stroke-linecap="round"/></svg>
<svg class="abs" style="left:1618.5px;top:306.7px" width="7" height="11"><path d="M1.2 0.800 L5.800 5.500 L1.200 10.200" fill="none" stroke="#e4e4e4" stroke-width="1.400" stroke-linecap="round" stroke-linejoin="round"/></svg>
<svg class="abs" style="left:1642.5px;top:299.8px" width="24" height="24.4" viewBox="0 0 24 24.4"><rect x="0.8" y="0.8" width="22.4" height="22.8" fill="#fff" stroke="#0c0c0c" stroke-width="1.6"/><path d="M3 6 C6 13 14 17 22 16" fill="none" stroke="#a9cfc0" stroke-width="2"/></svg>
<span class="t" style="left:1673.3px;top:305.27px;font-size:14.8px;color:#e2e2e2;letter-spacing:-0.480px;">Layer 8</span>
<div class="abs" style="left:1857px;top:306.9px;width:10.6px;height:10.6px;border-radius:50%;border:1.3px solid #d2d2d2"></div>
<div class="abs" style="left:1547px;top:326.2px;width:349px;height:28px;background:#535353;border-bottom:1px solid #484848"></div>
<div class="abs" style="left:1573px;top:326.2px;width:1px;height:28px;background:#4a4a4a"></div><div class="abs" style="left:1600.5px;top:326.2px;width:1px;height:28px;background:#4a4a4a"></div><div class="abs" style="left:1610.5px;top:326.2px;width:1px;height:28px;background:#4a4a4a"></div><div class="abs" style="left:1848px;top:326.2px;width:1px;height:28px;background:#4a4a4a"></div>
<div class="abs" style="left:1603.8px;top:327.7px;width:4.6px;height:25px;background:#858585"></div>
<svg class="abs" style="left:1551px;top:334.0px" width="16.4" height="12.4" viewBox="0 0 18 14"><path d="M1.2 7 C4 2.2 14 2.2 16.800 7 C14 11.800 4 11.800 1.200 7 Z" fill="none" stroke="#d4d4d4" stroke-width="2.1"/><circle cx="9" cy="6.800" r="3.300" fill="#d4d4d4"/><circle cx="7.900" cy="5.900" r="1.100" fill="#535353"/></svg>
<svg class="abs" style="left:1581px;top:332.2px" width="13" height="15" viewBox="0 0 13 15"><path d="M3.2 7 V4.6 C3.2 0.8 9.8 0.8 9.8 4.6 V7" fill="none" stroke="#d0d0d0" stroke-width="1.7"/><rect x="0.8" y="6.6" width="11.4" height="7.8" fill="#d0d0d0"/><path d="M6.5 9 V12" stroke="#535353" stroke-width="1.6" stroke-linecap="round"/></svg>
<svg class="abs" style="left:1618.5px;top:334.7px" width="7" height="11"><path d="M1.2 0.800 L5.800 5.500 L1.200 10.200" fill="none" stroke="#e4e4e4" stroke-width="1.400" stroke-linecap="round" stroke-linejoin="round"/></svg>
<svg class="abs" style="left:1642.5px;top:327.8px" width="24" height="24.4" viewBox="0 0 24 24.4"><rect x="0.8" y="0.8" width="22.4" height="22.8" fill="#fff" stroke="#0c0c0c" stroke-width="1.6"/><circle cx="12" cy="12.5" r="9.5" fill="#a9d0c0"/></svg>
<span class="t" style="left:1673.3px;top:333.27px;font-size:14.8px;color:#e2e2e2;letter-spacing:-0.480px;">Layer 9</span>
<div class="abs" style="left:1857px;top:334.9px;width:10.6px;height:10.6px;border-radius:50%;border:1.3px solid #d2d2d2"></div>
<div class="abs" style="left:1547px;top:354.2px;width:349px;height:28px;background:#535353;border-bottom:1px solid #484848"></div>
<div class="abs" style="left:1573px;top:354.2px;width:1px;height:28px;background:#4a4a4a"></div><div class="abs" style="left:1600.5px;top:354.2px;width:1px;height:28px;background:#4a4a4a"></div><div class="abs" style="left:1610.5px;top:354.2px;width:1px;height:28px;background:#4a4a4a"></div><div class="abs" style="left:1848px;top:354.2px;width:1px;height:28px;background:#4a4a4a"></div>
<div class="abs" style="left:1603.8px;top:355.7px;width:4.6px;height:25px;background:#e8504c"></div>
<svg class="abs" style="left:1551px;top:362.0px" width="16.4" height="12.4" viewBox="0 0 18 14"><path d="M1.2 7 C4 2.2 14 2.2 16.800 7 C14 11.800 4 11.800 1.200 7 Z" fill="none" stroke="#d4d4d4" stroke-width="2.1"/><circle cx="9" cy="6.800" r="3.300" fill="#d4d4d4"/><circle cx="7.900" cy="5.900" r="1.100" fill="#535353"/></svg>
<svg class="abs" style="left:1581px;top:360.2px" width="13" height="15" viewBox="0 0 13 15"><path d="M3.2 7 V4.6 C3.2 0.8 9.8 0.8 9.8 4.6 V7" fill="none" stroke="#d0d0d0" stroke-width="1.7"/><rect x="0.8" y="6.6" width="11.4" height="7.8" fill="#d0d0d0"/><path d="M6.5 9 V12" stroke="#535353" stroke-width="1.6" stroke-linecap="round"/></svg>
<svg class="abs" style="left:1618.5px;top:362.7px" width="7" height="11"><path d="M1.2 0.800 L5.800 5.500 L1.200 10.200" fill="none" stroke="#e4e4e4" stroke-width="1.400" stroke-linecap="round" stroke-linejoin="round"/></svg>
<svg class="abs" style="left:1642.5px;top:355.8px" width="24" height="24.4" viewBox="0 0 24 24.4"><rect x="0.8" y="0.8" width="22.4" height="22.8" fill="#fff" stroke="#0c0c0c" stroke-width="1.6"/><g fill="none" stroke="#ccd8d2" stroke-width=".8"><circle cx="8" cy="6" r="2.5"/><circle cx="16" cy="8" r="2"/><circle cx="9" cy="19" r="2.5"/><circle cx="16" cy="18" r="2.2"/><path d="M5 12 h3 M17 13 h3"/></g></svg>
<span class="t" style="left:1673.3px;top:361.27px;font-size:14.8px;color:#e2e2e2;letter-spacing:-0.480px;">Layer 2</span>
<div class="abs" style="left:1857px;top:362.9px;width:10.6px;height:10.6px;border-radius:50%;border:1.3px solid #d2d2d2"></div>
<div class="abs" style="left:1547px;top:382.2px;width:349px;height:28px;background:#535353;border-bottom:1px solid #484848"></div>
<div class="abs" style="left:1573px;top:382.2px;width:1px;height:28px;background:#4a4a4a"></div><div class="abs" style="left:1600.5px;top:382.2px;width:1px;height:28px;background:#4a4a4a"></div><div class="abs" style="left:1610.5px;top:382.2px;width:1px;height:28px;background:#4a4a4a"></div><div class="abs" style="left:1848px;top:382.2px;width:1px;height:28px;background:#4a4a4a"></div>
<div class="abs" style="left:1603.8px;top:383.7px;width:4.6px;height:25px;background:#0a0a0a"></div>
<svg class="abs" style="left:1551px;top:390.0px" width="16.4" height="12.4" viewBox="0 0 18 14"><path d="M1.2 7 C4 2.2 14 2.2 16.800 7 C14 11.800 4 11.800 1.200 7 Z" fill="none" stroke="#d4d4d4" stroke-width="2.1"/><circle cx="9" cy="6.800" r="3.300" fill="#d4d4d4"/><circle cx="7.900" cy="5.900" r="1.100" fill="#535353"/></svg>
<svg class="abs" style="left:1581px;top:388.2px" width="13" height="15" viewBox="0 0 13 15"><path d="M3.2 7 V4.6 C3.2 0.8 9.8 0.8 9.8 4.6 V7" fill="none" stroke="#d0d0d0" stroke-width="1.7"/><rect x="0.8" y="6.6" width="11.4" height="7.8" fill="#d0d0d0"/><path d="M6.5 9 V12" stroke="#535353" stroke-width="1.6" stroke-linecap="round"/></svg>
<svg class="abs" style="left:1618.5px;top:390.7px" width="7" height="11"><path d="M1.2 0.800 L5.800 5.500 L1.200 10.200" fill="none" stroke="#e4e4e4" stroke-width="1.400" stroke-linecap="round" stroke-linejoin="round"/></svg>
<svg class="abs" style="left:1642.5px;top:383.8px" width="24" height="24.4" viewBox="0 0 24 24.4"><rect x="0.8" y="0.8" width="22.4" height="22.8" fill="#fff" stroke="#0c0c0c" stroke-width="1.6"/></svg>
<span class="t" style="left:1673.3px;top:389.27px;font-size:14.8px;color:#e2e2e2;letter-spacing:-0.324px;">Layer 10</span>
<div class="abs" style="left:1857px;top:390.9px;width:10.6px;height:10.6px;border-radius:50%;border:1.3px solid #d2d2d2"></div>
<span class="t" style="left:1545.5px;top:1048.07px;font-size:13.5px;color:#d6d6d6;letter-spacing:0.090px;">8 Layers</span>
<svg class="abs" style="left:1640px;top:1043px" width="240" height="22" viewBox="1640 1043 240 22" fill="none" stroke="#cdcdcd" stroke-width="1.3">
<path d="M1647.5 1046 V1062 M1645 1048.5 H1660 M1645 1059.5 H1653 M1657.5 1046 V1054"/><path d="M1656.2 1054.5 H1662.8 V1063 L1659.5 1060.5 L1656.2 1063 Z" fill="#cdcdcd" stroke="none"/>
<path d="M1685.5 1050 H1680 V1061.5 H1691.5 V1056 M1686.5 1055 L1693.5 1047.7 M1689 1047.5 H1693.8 V1052.3"/>
<circle cx="1719" cy="1052" r="4.8"/><path d="M1722.5 1055.8 L1728.3 1061.8" stroke-width="1.8"/>
<rect x="1748.5" y="1048.5" width="8" height="8" fill="#8c8c8c"/><rect x="1752" y="1052" width="8" height="8" fill="#8c8c8c" stroke="#9d9d9d"/><rect x="1751.5" y="1051.5" width="5" height="5" fill="#cdcdcd" stroke="none"/>
<path d="M1780.5 1047 V1051.5 H1785"/><path d="M1783.3 1049.5 L1785.5 1051.5 L1783.3 1053.5" stroke-width="1.1"/><rect x="1788" y="1048.5" width="11" height="11"/><path d="M1793.5 1051 V1057 M1790.5 1054 H1796.5"/>
<rect x="1819.5" y="1048" width="12.5" height="12.5" rx="1"/><path d="M1825.8 1051 V1057.5 M1822.5 1054.3 H1829"/>
<path d="M1852 1049.5 H1866 M1856.5 1049 V1047 H1861.5 V1049 M1853.5 1050 V1061.5 H1864.5 V1050 M1857 1052.5 V1059 M1859 1052.5 V1059 M1861 1052.5 V1059"/>
</svg>
<div class="abs" style="left:1538px;top:1067px;width:366px;height:1px;background:#3f3f3f"></div><div class="abs" style="left:1708px;top:1070px;width:24px;height:4px;background:repeating-linear-gradient(90deg,#3f3f3f 0 1px,#5a5a5a 1px 2px,#4a4a4a 2px 3px)"></div>
<svg class="abs" style="left:1904px;top:139px" width="12" height="8"><path d="M1.5 6.5 L6 2 L10.5 6.5" fill="none" stroke="#bdbdbd" stroke-width="1.3"/></svg>
<svg class="abs" style="left:1904px;top:1064px" width="12" height="8"><path d="M1.5 1.5 L6 6 L10.5 1.5" fill="none" stroke="#bdbdbd" stroke-width="1.3"/></svg>
<div class="abs" style="left:1907px;top:485px;width:13px;height:36px;border-radius:6px 0 0 6px;background:#646464"></div>

<!-- contextual task bar -->
<div class="abs" style="left:729px;top:1009px;width:563.5px;height:46.5px;background:#4b4b4b;border-radius:7px;box-shadow:0 0 0 1px #3b3b3b,0 2px 8px rgba(0,0,0,.4)"></div>
<div class="abs" style="left:736.5px;top:1014.5px;width:5px;height:35px;border-radius:2.5px;background:#878787"></div>
<div class="abs" style="left:755.5px;top:1014.5px;width:336.500px;height:36px;border:1px solid #696969;border-radius:3px"></div>
<div class="abs" style="left:970.5px;top:1019px;width:1px;height:27px;background:#696969"></div>
<svg class="abs" style="left:765px;top:1019px" width="26" height="26" viewBox="0 0 26 26"><circle cx="3.8" cy="6.5" r="2" fill="none" stroke="#d8d8d8" stroke-width="1.2"/><circle cx="3.8" cy="22" r="1.800" fill="none" stroke="#d8d8d8" stroke-width="1.2"/><circle cx="21" cy="22" r="1.800" fill="none" stroke="#d8d8d8" stroke-width="1.2"/><path d="M5.8 6.5 H13 M3.8 8.5 V20 M5.800 22 H19 M21 20 V13" fill="none" stroke="#d8d8d8" stroke-width="1.3"/><path d="M6.500 11.500 H13.500 L17.500 19.500 H6.500 Z" fill="#d6d6d6"/><path d="M18.5 1 L19.6 4.6 L23 5.8 L19.6 7 L18.5 10.6 L17.4 7 L14 5.8 L17.4 4.6 Z" fill="#e4e4e4"/><path d="M14.5 10.5 L15.3 12.7 L17.5 13.5 L15.3 14.3 L14.5 16.5 L13.7 14.3 L11.5 13.5 L13.7 12.7 Z" fill="#e4e4e4" stroke="#4b4b4b" stroke-width=".6"/></svg>
<span class="t" style="left:795.8px;top:1025.86px;font-size:16px;color:#ececec;letter-spacing:0.173px;">Gen Shape Fill (Beta)</span>
<svg class="abs" style="left:984px;top:1021px" width="23" height="22" viewBox="0 0 23 22"><rect x="1" y="1.500" width="20" height="19" fill="none" stroke="#cfcfcf" stroke-width="1.2"/><rect x="3.500" y="10" width="8" height="8" fill="#cfcfcf"/><rect x="11" y="4" width="7.500" height="7.500" fill="#a8a8a8"/><path d="M0.500 0.500 L22.500 21.500" stroke="#4b4b4b" stroke-width="2.600"/><path d="M0.500 0.500 L22.500 21.500" stroke="#cfcfcf" stroke-width="1.100"/></svg>
<span class="t" style="left:1012.7px;top:1025.86px;font-size:16px;color:#ececec;letter-spacing:0.875px;">Ungroup</span>
<svg class="abs" style="left:1103px;top:1021px" width="24" height="22" viewBox="0 0 26 24"><rect x="8.2" y="7.8" width="9.6" height="6.8" fill="#8c8c8c" stroke="#d6d6d6" stroke-width="1.3"/><g stroke="#d6d6d6" stroke-width="1.3" fill="none"><path d="M1.5 1.5 L6.3 6 M6.5 2.3 V6.2 H2.6"/><path d="M24.5 1.5 L19.7 6 M19.5 2.3 V6.2 H23.4"/><path d="M1.5 21.500 L6.3 17 M6.500 20.700 V16.800 H2.600"/><path d="M24.500 21.500 L19.700 17 M19.500 20.700 V16.800 H23.400"/></g></svg>
<svg class="abs" style="left:1141px;top:1020.500px" width="24" height="24" viewBox="0 0 24 24"><circle cx="12" cy="12" r="10.600" fill="url(#dg)" stroke="#dcdcdc" stroke-width="1.400"/><path d="M12 12 L12 1.500 M12 12 L21 7 M12 12 L21.500 15.500 M12 12 L14 22 M12 12 L5 20 M12 12 L1.600 13 M12 12 L4 5" stroke="#555" stroke-width=".9"/><circle cx="12" cy="12" r="2.200" fill="#444"/></svg>
<div class="abs" style="left:1174px;top:1020px;width:25px;height:25px;border:1px solid #2e2e2e;background:#444"></div>
<span class="t" style="left:1181.5px;top:1025.11px;font-size:17px;color:#e8e8e8;">?</span>
<div class="abs" style="left:1211px;top:1022px;width:22px;height:4.400px;background:#d4d4d4;box-shadow:0 7.200px 0 #d4d4d4,0 14.400px 0 #d4d4d4"></div>
<div class="abs" style="left:1253px;top:1030px;width:5px;height:5px;border-radius:50%;background:#d4d4d4;box-shadow:8px 0 0 #d4d4d4,16px 0 0 #d4d4d4"></div>

<!-- status bar -->
<div class="abs" style="left:771px;top:1080px;width:1126px;height:21px;background:#4c4c4c"></div>
<div class="abs" style="left:1897px;top:1078px;width:23px;height:23px;background:#555"></div>
<div class="abs" style="left:0;top:1100.500px;width:1920px;height:3px;background:#1d1d1d"></div>
<div class="abs" style="left:103px;top:1080px;width:66px;height:21px;background:#484848;border:1px solid #5a5a5a"></div>
<span class="t" style="left:107.5px;top:1085.23px;font-size:14.5px;color:#ececec;letter-spacing:-0.365px;">20.33%</span>
<div class="abs" style="left:169px;top:1080px;width:24px;height:21px;background:#484848;border:1px solid #5a5a5a"></div>
<svg class="chev" style="left:175px;top:1089px"><use href="#chv"/></svg>
<div class="abs" style="left:200px;top:1080px;width:67px;height:21px;background:#484848;border:1px solid #5a5a5a"></div>
<span class="t" style="left:204px;top:1085.15px;font-size:14px;color:#ececec;">0°</span>
<div class="abs" style="left:267px;top:1080px;width:24px;height:21px;background:#484848;border:1px solid #5a5a5a"></div>
<svg class="chev" style="left:272.500px;top:1089px"><use href="#chv"/></svg>
<svg class="abs" style="left:300px;top:1084px" width="40" height="14" viewBox="0 0 40 14" fill="#727272"><rect x="3.500" y="2" width="1.800" height="10"/><path d="M13 2 V12 L6 7 Z M35 2 V12 L28.500 7 Z"/></svg>
<div class="abs" style="left:346px;top:1080px;width:54px;height:21px;background:#484848;border:1px solid #5a5a5a"></div>
<span class="t" style="left:351px;top:1085.15px;font-size:14px;color:#ececec;">1</span>
<div class="abs" style="left:400px;top:1080px;width:24px;height:21px;background:#484848;border:1px solid #5a5a5a"></div>
<svg class="chev" style="left:406px;top:1089px"><use href="#chv"/></svg>
<svg class="abs" style="left:430px;top:1084px" width="40" height="14" viewBox="0 0 40 14" fill="#727272"><path d="M6.500 2 V12 L13 7 Z M27 2 V12 L33.500 7 Z"/><rect x="34.500" y="2" width="1.800" height="10"/></svg>
<span class="t" style="left:584px;top:1085.73px;font-size:14.5px;color:#d4d4d4;letter-spacing:-0.184px;">Selection</span>
<svg class="abs" style="left:755px;top:1084px" width="10" height="14"><path d="M1.500 1.500 V12.500 L8.500 7 Z" fill="#e0e0e0"/></svg>
<svg class="abs" style="left:778px;top:1084px" width="8" height="14"><path d="M6.500 2 L2 7 L6.500 12" fill="none" stroke="#a4a4a4" stroke-width="1.300"/></svg>
<div class="abs" style="left:1321.500px;top:1082px;width:31px;height:17px;border-radius:8.500px;background:#5f5f5f"></div>
<svg class="abs" style="left:1882px;top:1083px" width="8" height="14"><path d="M1.500 2 L6 7 L1.500 12" fill="none" stroke="#b4b4b4" stroke-width="1.300"/></svg>

<!-- watermark -->
<span id="wm1" class="t" style="left:858px;top:982px;font-size:70px;font-weight:700;color:rgba(216,216,216,.9);font-family:'DejaVu Sans',sans-serif;direction:rtl;-webkit-text-stroke:3.5px rgba(216,216,216,.9);line-height:1.2">نفذلي</span>
<span class="t" style="left:861px;top:1063.33px;font-size:38px;color:rgba(216,216,216,.92);font-weight:700;letter-spacing:-1.609px;">nafezly.com</span>

</body>
</html>
